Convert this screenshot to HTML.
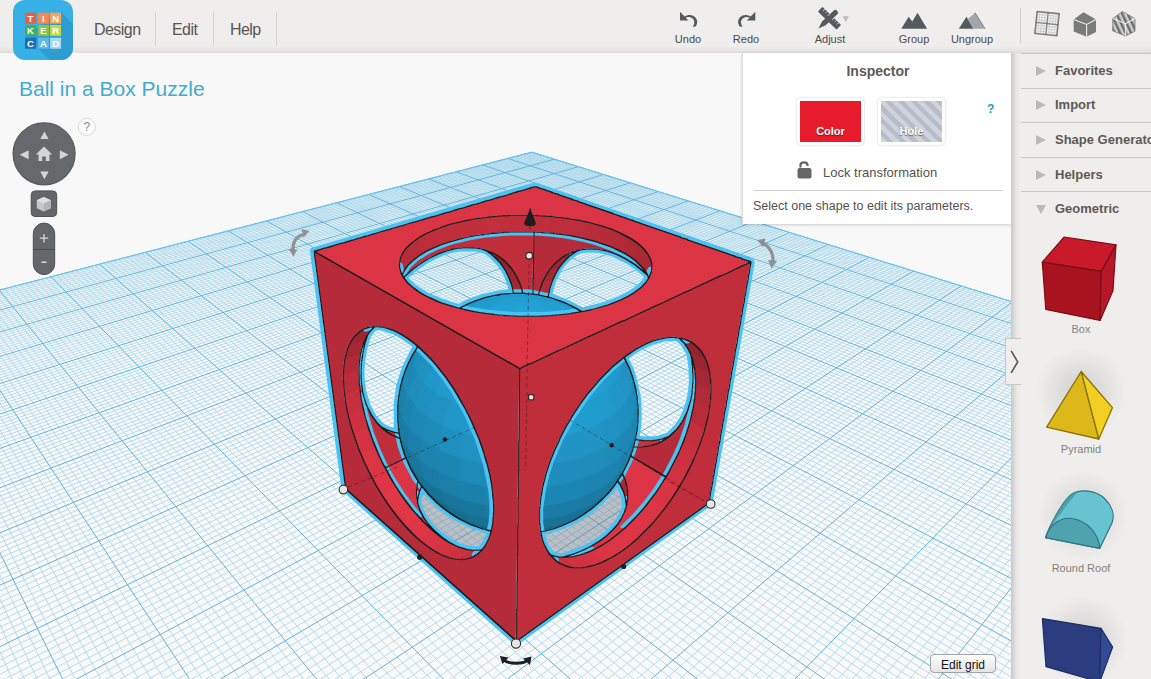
<!DOCTYPE html><html><head><meta charset="utf-8"><style>
*{margin:0;padding:0;box-sizing:border-box}
html,body{width:1151px;height:679px;overflow:hidden;background:#efeeec;font-family:"Liberation Sans",sans-serif;position:relative}
.abs{position:absolute}
#top{left:0;top:0;width:1151px;height:53px;background:linear-gradient(#efeeec 0,#efeeec 46px,#e2e1df 52px,#d9d8d6 53px)}
.nav{position:absolute;top:21px;font-size:16px;color:#595551;letter-spacing:-0.55px}
.sep{position:absolute;top:12px;width:1px;height:34px;background:#d6d4d1}
.tb{position:absolute;top:33px;font-size:11px;color:#4e4a47;text-align:center;width:60px;margin-left:-30px}
#view{left:0;top:53px;width:1011px;height:626px;background:#f8f8f8;overflow:hidden}
#side{left:1021px;top:53px;width:130px;height:626px;background:#efeeec}
#shadow{left:1011px;top:53px;width:10px;height:626px;background:linear-gradient(90deg,#c9c8c6,#e6e5e3 50%,#efeeec)}
.srow{position:absolute;left:0;width:130px;height:1px;background:#c9c6c2}
.stxt{position:absolute;left:34px;font-size:13px;font-weight:bold;color:#5d5955}
.tri{position:absolute;left:15px;width:0;height:0;border-top:5px solid transparent;border-bottom:5px solid transparent;border-left:10px solid #bdb9b5}
.lbl{position:absolute;font-size:11px;color:#85817d;text-align:center;width:100px;left:10px}
#insp{left:742px;top:53px;width:269px;height:171px;background:#fff;border-left:1px solid #dcdcdc;box-shadow:0 1px 3px rgba(0,0,0,.18)}
</style></head><body>
<div id="view" class="abs"><svg width="1011" height="626" viewBox="0 53 1011 626" style="position:absolute;left:0;top:0"><path d="M-202.8 6781.2 L1433.1 433 L531.9 152.2 L-323.9 373.9 Z" fill="#f9f9f9"/>
<path d="M-105.9 6405.5L-316.1 371.9M-210.7 6358.9L1423.9 430.2M-19.1 6068.7L-308.4 369.9M-217.8 5985.4L1414.8 427.3M59.1 5764.9L-300.8 367.9M-224.1 5652.6L1405.9 424.5M130.1 5489.5L-293.2 366M-229.7 5354.2L1397 421.8M194.7 5238.8L-285.7 364M-234.8 5085.1L1388.2 419M253.8 5009.5L-278.3 362.1M-239.4 4841.3L1379.5 416.3M308 4799.1L-270.9 360.2M-243.6 4619.3L1370.9 413.6M358 4605.2L-263.6 358.3M-247.5 4416.3L1362.4 411M404.1 4426L-256.3 356.4M-251 4230L1354 408.4M486.7 4105.6L-241.9 352.7M-257.2 3899.9L1337.3 403.2M523.8 3961.8L-234.8 350.8M-260 3753L1329.1 400.6M558.4 3827.4L-227.8 349M-262.6 3616.4L1321 398.1M590.8 3701.6L-220.8 347.2M-265 3489.1L1313 395.6M621.2 3583.6L-213.8 345.4M-267.2 3370.2L1305.1 393.1M649.8 3472.7L-207 343.6M-269.4 3258.9L1297.2 390.7M676.7 3368.2L-200.1 341.8M-271.3 3154.5L1289.4 388.2M702.1 3269.6L-193.3 340.1M-273.2 3056.4L1281.6 385.8M726.1 3176.4L-186.6 338.3M-274.9 2963.9L1274 383.4M770.4 3004.7L-173.3 334.9M-278.1 2794.3L1258.9 378.7M790.8 2925.4L-166.7 333.2M-279.6 2716.3L1251.5 376.4M810.3 2850L-160.2 331.5M-281 2642.4L1244.1 374.1M828.7 2778.2L-153.7 329.8M-282.3 2572.3L1236.8 371.8M846.4 2709.8L-147.3 328.2M-283.6 2505.6L1229.5 369.6M863.2 2644.6L-140.9 326.5M-284.8 2442.1L1222.4 367.4M879.2 2582.3L-134.6 324.9M-285.9 2381.7L1215.3 365.1M894.6 2522.8L-128.3 323.2M-287 2324L1208.2 362.9M909.2 2465.9L-122 321.6M-288.1 2268.9L1201.3 360.8M936.8 2359L-109.7 318.4M-290 2165.9L1187.5 356.5M949.7 2308.8L-103.6 316.8M-290.9 2117.7L1180.7 354.4M962.1 2260.6L-97.5 315.3M-291.8 2071.5L1174 352.3M974 2214.3L-91.5 313.7M-292.6 2027.1L1167.3 350.2M985.5 2169.8L-85.5 312.1M-293.4 1984.5L1160.7 348.1M996.6 2126.9L-79.6 310.6M-294.2 1943.6L1154.1 346.1M1007.2 2085.6L-73.7 309.1M-295 1904.2L1147.7 344.1M1017.5 2045.8L-67.8 307.6M-295.7 1866.3L1141.2 342.1M1027.4 2007.4L-62 306.1M-296.4 1829.8L1134.8 340.1M1046.1 1934.6L-50.5 303.1M-297.7 1760.6L1122.2 336.1M1055 1900L-44.8 301.6M-298.3 1727.9L1116 334.2M1063.7 1866.6L-39.2 300.1M-298.9 1696.3L1109.8 332.3M1072 1834.2L-33.6 298.7M-299.5 1665.7L1103.7 330.4M1080.1 1802.9L-28 297.2M-300 1636.1L1097.7 328.5M1087.9 1772.6L-22.5 295.8M-300.6 1607.5L1091.6 326.6M1095.4 1743.2L-17 294.4M-301.1 1579.9L1085.7 324.8M1102.8 1714.7L-11.5 293M-301.6 1553.1L1079.8 322.9M1109.9 1687.1L-6.1 291.6M-302.1 1527.1L1073.9 321.1M1123.5 1634.3L4.6 288.8M-303 1477.5L1062.3 317.5M1130 1609L9.9 287.4M-303.5 1453.8L1056.6 315.7M1136.3 1584.5L15.2 286M-303.9 1430.9L1050.9 313.9M1142.5 1560.6L20.4 284.7M-304.3 1408.5L1045.3 312.2M1148.5 1537.4L25.6 283.3M-304.7 1386.8L1039.7 310.4M1154.3 1514.9L30.8 282M-305.1 1365.7L1034.2 308.7M1159.9 1492.9L35.9 280.7M-305.5 1345.2L1028.7 307M1165.4 1471.5L41 279.4M-305.9 1325.3L1023.2 305.3M1170.8 1450.7L46.1 278M-306.3 1305.9L1017.8 303.6M1181.1 1410.7L56.1 275.4M-307 1268.6L1007.2 300.3M1186.1 1391.4L61.1 274.2M-307.3 1250.7L1001.9 298.6M1190.9 1372.6L66 272.9M-307.7 1233.2L996.6 297M1195.7 1354.3L70.9 271.6M-308 1216.2L991.5 295.4M1200.3 1336.4L75.8 270.3M-308.3 1199.6L986.3 293.8M1204.8 1319L80.6 269.1M-308.6 1183.4L981.2 292.2M1209.1 1301.9L85.5 267.8M-308.9 1167.6L976.1 290.6M1213.4 1285.3L90.2 266.6M-309.2 1152.2L971.1 289M1217.6 1269.1L95 265.4M-309.5 1137.1L966.1 287.5M1225.7 1237.7L104.4 262.9M-310 1108.1L956.2 284.4M1229.6 1222.5L109 261.7M-310.3 1094L951.3 282.9M1233.4 1207.7L113.7 260.5M-310.5 1080.3L946.5 281.4M1237.2 1193.1L118.3 259.3M-310.8 1066.9L941.7 279.9M1240.8 1178.9L122.8 258.2M-311 1053.8L936.9 278.4M1244.4 1165.1L127.4 257M-311.3 1041L932.1 276.9M1247.9 1151.5L131.9 255.8M-311.5 1028.4L927.4 275.4M1251.4 1138.1L136.4 254.6M-311.8 1016.2L922.8 274M1254.7 1125.1L140.8 253.5M-312 1004.1L918.1 272.5M1261.2 1099.8L149.7 251.2M-312.4 980.9L909 269.7M1264.4 1087.6L154 250.1M-312.6 969.6L904.4 268.3M1267.5 1075.6L158.4 248.9M-312.8 958.5L899.9 266.9M1270.5 1063.8L162.7 247.8M-313.1 947.7L895.5 265.5M1273.5 1052.2L167 246.7M-313.3 937.1L891 264.1M1276.4 1040.9L171.3 245.6M-313.4 926.7L886.6 262.7M1279.3 1029.8L175.5 244.5M-313.6 916.5L882.2 261.4M1282.1 1018.9L179.7 243.4M-313.8 906.5L877.9 260M1284.8 1008.2L183.9 242.3M-314 896.6L873.6 258.7M1290.2 987.4L192.2 240.2M-314.4 877.6L865.1 256M1292.8 977.3L196.3 239.1M-314.6 868.3L860.8 254.7M1295.4 967.4L200.4 238M-314.7 859.2L856.7 253.4M1297.9 957.6L204.5 237M-314.9 850.3L852.5 252.1M1300.3 948.1L208.6 235.9M-315.1 841.5L848.4 250.8M1302.8 938.7L212.6 234.9M-315.2 832.9L844.3 249.5M1305.1 929.4L216.6 233.9M-315.4 824.4L840.2 248.2M1307.5 920.3L220.5 232.8M-315.5 816.1L836.1 247M1309.8 911.4L224.5 231.8M-315.7 808L832.1 245.7M1314.3 894L232.3 229.8M-316 792L824.2 243.3M1316.4 885.5L236.2 228.8M-316.1 784.3L820.2 242M1318.6 877.2L240.1 227.8M-316.3 776.7L816.3 240.8M1320.7 869L243.9 226.8M-316.4 769.2L812.4 239.6M1322.8 860.9L247.7 225.8M-316.6 761.8L808.6 238.4M1324.8 853L251.5 224.8M-316.7 754.6L804.7 237.2M1326.8 845.2L255.3 223.8M-316.8 747.4L800.9 236M1328.8 837.5L259.1 222.9M-317 740.4L797.2 234.8M1330.8 829.9L262.8 221.9M-317.1 733.5L793.4 233.7M1334.6 815.2L270.2 220M-317.4 720.1L786 231.3M1336.4 808L273.8 219M-317.5 713.5L782.3 230.2M1338.3 800.8L277.5 218.1M-317.6 707L778.6 229.1M1340.1 793.9L281.1 217.1M-317.7 700.6L775 227.9M1341.8 787L284.7 216.2M-317.8 694.4L771.4 226.8M1343.6 780.2L288.3 215.3M-318 688.2L767.8 225.7M1345.3 773.5L291.9 214.3M-318.1 682.1L764.2 224.6M1347 766.9L295.4 213.4M-318.2 676.1L760.7 223.5M1348.7 760.4L299 212.5M-318.3 670.2L757.2 222.4M1352 747.7L305.9 210.7M-318.5 658.6L750.2 220.2M1353.6 741.5L309.4 209.8M-318.6 653L746.8 219.1M1355.1 735.4L312.9 208.9M-318.7 647.4L743.3 218.1M1356.7 729.3L316.3 208M-318.8 641.9L739.9 217M1358.2 723.4L319.7 207.1M-318.9 636.5L736.5 215.9M1359.7 717.5L323.1 206.3M-319 631.2L733.2 214.9M1361.2 711.7L326.5 205.4M-319.1 625.9L729.8 213.9M1362.7 706L329.8 204.5M-319.2 620.7L726.5 212.8M1364.2 700.4L333.2 203.6M-319.3 615.6L723.2 211.8M1367 689.3L339.8 201.9M-319.5 605.6L716.7 209.8M1368.4 683.9L343.1 201.1M-319.6 600.7L713.4 208.7M1369.8 678.6L346.4 200.2M-319.7 595.8L710.2 207.7M1371.1 673.3L349.6 199.4M-319.8 591.1L707 206.7M1372.5 668.1L352.9 198.5M-319.9 586.4L703.8 205.7M1373.8 663L356.1 197.7M-320 581.7L700.7 204.8M1375.1 658L359.3 196.9M-320.1 577.1L697.5 203.8M1376.4 653L362.5 196.1M-320.1 572.6L694.4 202.8M1377.6 648L365.6 195.2M-320.2 568.1L691.3 201.8M1380.1 638.4L371.9 193.6M-320.4 559.3L685.1 199.9M1381.4 633.6L375 192.8M-320.5 555L682.1 199M1382.6 628.9L378.1 192M-320.6 550.8L679.1 198M1383.8 624.3L381.2 191.2M-320.6 546.6L676 197.1M1384.9 619.7L384.3 190.4M-320.7 542.5L673 196.2M1386.1 615.2L387.3 189.6M-320.8 538.4L670.1 195.2M1387.3 610.7L390.4 188.8M-320.9 534.3L667.1 194.3M1388.4 606.3L393.4 188M-320.9 530.3L664.2 193.4M1389.5 602L396.4 187.3M-321 526.4L661.2 192.5M1391.7 593.4L402.4 185.7M-321.2 518.7L655.4 190.7M1392.8 589.2L405.3 184.9M-321.2 514.9L652.6 189.8M1393.9 585.1L408.3 184.2M-321.3 511.1L649.7 188.9M1394.9 581L411.2 183.4M-321.4 507.4L646.9 188M1396 576.9L414.1 182.7M-321.4 503.7L644 187.1M1397 572.9L417 181.9M-321.5 500.1L641.2 186.2M1398 568.9L419.9 181.2M-321.6 496.5L638.4 185.4M1399 565L422.8 180.4M-321.6 493L635.7 184.5M1400 561.1L425.7 179.7M-321.7 489.5L632.9 183.7M1402 553.5L431.4 178.2M-321.8 482.6L627.4 181.9M1403 549.8L434.2 177.5M-321.9 479.2L624.7 181.1M1403.9 546.1L437 176.7M-322 475.9L622 180.3M1404.9 542.4L439.8 176M-322 472.6L619.3 179.4M1405.8 538.8L442.5 175.3M-322.1 469.3L616.7 178.6M1406.7 535.2L445.3 174.6M-322.2 466L614 177.8M1407.6 531.7L448.1 173.9M-322.2 462.8L611.4 176.9M1408.5 528.2L450.8 173.2M-322.3 459.7L608.8 176.1M1409.4 524.7L453.5 172.5M-322.3 456.6L606.1 175.3M1411.2 517.9L458.9 171.1M-322.5 450.4L601 173.7M1412.1 514.5L461.6 170.4M-322.5 447.4L598.4 172.9M1412.9 511.2L464.3 169.7M-322.6 444.4L595.9 172.1M1413.8 507.9L466.9 169M-322.6 441.4L593.3 171.3M1414.6 504.6L469.6 168.3M-322.7 438.5L590.8 170.5M1415.4 501.4L472.2 167.6M-322.7 435.6L588.3 169.7M1416.2 498.2L474.8 166.9M-322.8 432.7L585.8 169M1417.1 495.1L477.4 166.3M-322.8 429.8L583.3 168.2M1417.9 492L480 165.6M-322.9 427L580.8 167.4M1419.5 485.8L485.2 164.3M-323 421.5L575.9 165.9M1420.2 482.8L487.8 163.6M-323.1 418.7L573.5 165.1M1421 479.8L490.3 162.9M-323.1 416L571.1 164.4M1421.8 476.8L492.8 162.3M-323.2 413.4L568.7 163.6M1422.5 473.9L495.4 161.6M-323.2 410.7L566.3 162.9M1423.3 471L497.9 161M-323.3 408.1L563.9 162.1M1424 468.1L500.4 160.3M-323.3 405.5L561.5 161.4M1424.8 465.2L502.9 159.7M-323.4 402.9L559.2 160.7M1425.5 462.4L505.3 159M-323.4 400.4L556.8 159.9M1426.9 456.8L510.3 157.8M-323.5 395.4L552.2 158.5M1427.6 454.1L512.7 157.1M-323.5 392.9L549.9 157.8M1428.3 451.3L515.1 156.5M-323.6 390.4L547.6 157.1M1429 448.7L517.6 155.9M-323.6 388L545.3 156.4M1429.7 446L520 155.2M-323.7 385.6L543 155.6M1430.4 443.3L522.4 154.6M-323.7 383.2L540.8 154.9M1431.1 440.7L524.8 154M-323.8 380.9L538.5 154.2M1431.7 438.1L527.1 153.4M-323.8 378.5L536.3 153.5M1432.4 435.6L529.5 152.8M-323.9 376.2L534.1 152.8" stroke="#a6d5ea" stroke-width="0.8" fill="none"/>
<path d="M-202.8 6781.2L-323.9 373.9M-202.8 6781.2L1433.1 433M446.9 4260L-249.1 354.5M-254.2 4058.5L1345.6 405.8M748.8 3088.3L-179.9 336.6M-276.6 2876.7L1266.4 381.1M923.3 2411.3L-115.8 320M-289.1 2216.3L1194.3 358.6M1036.9 1970.4L-56.3 304.6M-297 1794.6L1128.5 338.1M1116.8 1660.3L-0.7 290.2M-302.6 1501.9L1068.1 319.3M1176 1430.4L51.1 276.7M-306.6 1287L1012.5 301.9M1221.7 1253.2L99.7 264.2M-309.7 1122.4L961.1 285.9M1258 1112.3L145.3 252.3M-312.2 992.4L913.5 271.1M1287.5 997.7L188.1 241.2M-314.2 887L869.3 257.3M1312 902.6L228.4 230.8M-315.8 799.9L828.1 244.5M1332.7 822.5L266.5 220.9M-317.2 726.7L789.7 232.5M1350.3 754L302.5 211.6M-318.4 664.4L753.7 221.3M1365.6 694.8L336.5 202.8M-319.4 610.6L719.9 210.8M1378.9 643.2L368.8 194.4M-320.3 563.7L688.2 200.9M1390.6 597.7L399.4 186.5M-321.1 522.5L658.3 191.6M1401 557.3L428.5 178.9M-321.8 486L630.2 182.8M1410.3 521.3L456.2 171.8M-322.4 453.5L603.6 174.5M1418.7 488.9L482.6 164.9M-322.9 424.2L578.4 166.7M1426.2 459.6L507.8 158.4M-323.4 397.9L554.5 159.2M1433.1 433L531.9 152.2M-323.9 373.9L531.9 152.2" stroke="#4faadb" stroke-width="0.9" fill="none"/>
<path d="M-323.9 373.9L531.9 152.2L1433.1 433" stroke="#66c4ee" stroke-width="1" fill="none"/>
<path d="M421.5 485.8L419.2 491.8L417.8 497.5L417.8 504.5L419.8 510.2L423.8 517.8L427.8 523.5L432.8 529.2L437.5 533.5L444.8 539.2L450.5 542.8L457.5 546.2L463.2 548.2L471.5 549.8L478.5 549.8L481.8 549.2L485.2 544.8L488.2 538.8L490.5 530.8L482.8 528.8L470.8 524.5L459.2 518.8L452.5 514.8L443.2 508.2L436.8 502.8L428.2 494.2ZM617.5 480.8L608.5 492.5L600.2 501.2L591.2 508.8L582.2 515.2L574.8 519.5L561.2 525.8L550.2 529.5L540.5 531.5L542.2 538.8L544.2 544.5L546.8 549.8L549.8 554.2L554.8 555.8L561.8 556.8L576.8 552.2L584.8 548.8L596.5 542.5L606.2 535.5L612.8 529.2L617.5 523.5L621.2 517.8L623.5 513.2L625.8 506.5L625.5 500.8L624.2 494.8L621.5 487.8Z" fill="#6b7785" fill-opacity="0.45" fill-rule="evenodd"/>
<path d="M313.8 251.2L345.5 488.5L515.8 640.5L519.2 368.2ZM363.8 328.5L368.5 326.8L372.2 326.2L379.2 326.2L388.5 328.2L395.2 330.8L401.5 334.2L408.2 338.5L415.2 343.8L420.2 348.2L430.8 358.8L437.5 366.5L445.5 376.8L453.5 388.5L459.8 398.8L471.2 420.5L479.8 441.2L487.2 464.2L489.5 473.8L491.8 486.5L493.2 498.2L493.2 503.8L493.5 504.2L493.5 512.8L493.2 513.2L493.2 518.2L491.5 529.2L489.2 537.2L485.5 544.8L481.8 549.8L477.2 554.2L472.8 556.8L466.8 558.8L461.5 559.5L455.8 559.2L448.5 557.5L440.8 554.5L435.2 551.5L429.8 548.2L421.8 542.2L413.2 534.5L404.2 525.2L390.5 508.2L383.2 497.5L375.8 485.5L367.2 469.2L357.8 447.8L350.5 426.2L347.2 413.2L345.2 403.2L343.5 390.8L343.2 381.5L342.8 381.2L342.8 372.5L343.2 372.2L343.5 364.2L344.5 357.8L347.5 347.5L350.2 341.8L353.5 336.8L358.5 331.8Z" fill="#b62b39" fill-rule="evenodd"/>
<path d="M750.5 261.8L519.5 368.2L516.2 640.8L708.5 502.8ZM691.2 341.8L694.8 344.5L699.5 349.2L704.5 356.8L707.2 363.2L710.2 376.2L710.5 383.2L710.8 383.5L710.8 393.8L710.5 394.2L710.2 402.2L708.5 413.2L703.8 432.2L700.2 443.2L695.2 455.8L682.5 481.2L675.8 492.2L667.2 504.8L657.8 516.8L651.2 524.5L634.5 540.8L628.5 545.8L617.8 553.5L608.2 559.2L601.8 562.2L594.8 564.8L585.2 567.2L572.5 567.5L563.5 565.2L558.8 562.8L555.5 560.5L548.8 553.5L546.5 549.8L543.2 542.8L540.5 533.5L539.5 527.2L539.2 507.5L540.5 496.2L542.8 484.2L545.8 472.8L549.8 460.8L554.2 449.8L559.2 438.8L567.8 422.5L573.5 413.2L581.8 400.8L592.2 387.5L599.2 379.5L615.2 363.8L621.2 358.8L632.8 350.5L640.2 346.2L648.5 342.2L656.8 339.2L666.2 337.2L674.8 336.8L679.8 337.5L685.8 339.2Z" fill="#c02e3c" fill-rule="evenodd"/>
<path d="M750.2 261.8L748.5 260.8L741.8 258.8L535.8 186.5L532.2 187.2L524.2 189.8L518.5 191.2L504.8 195.5L499.2 196.8L491.2 199.5L485.5 200.8L477.5 203.5L471.8 204.8L463.8 207.5L458.2 208.8L450.2 211.5L444.5 212.8L442.2 213.8L314.2 251.2L518.8 367.8L520.2 367.8ZM398.8 264.2L399.5 259.2L402.2 252.8L405.8 247.8L410.5 243.2L415.2 239.5L424.5 233.8L431.5 230.5L440.8 226.8L460.5 221.2L482.5 217.2L498.2 215.5L508.5 215.2L508.8 214.8L536.2 214.8L536.5 215.2L546.8 215.5L562.8 217.2L583.8 220.8L601.5 225.5L619.2 232.2L626.5 235.8L633.2 239.8L638.2 243.5L644.2 249.2L648.2 254.5L650.2 258.5L651.5 262.8L651.8 267.5L651.2 271.8L648.5 278.2L644.8 283.2L640.5 287.5L634.5 292.2L628.5 295.8L619.8 300.2L612.5 303.2L592.8 309.2L578.5 312.2L567.8 313.8L555.8 315.2L540.8 315.8L540.5 316.2L515.8 316.2L515.5 315.8L504.2 315.5L490.8 314.2L467.2 310.2L451.5 306.2L440.5 302.5L433.2 299.5L425.5 295.8L419.2 292.2L411.8 286.8L407.2 282.5L403.2 277.5L400.5 272.5L399.5 269.5Z" fill="#db3444" fill-rule="evenodd"/>
<path d="M690.8 355.5L692.2 364.2L692.5 372.2L692.8 372.5L692.8 382.8L691.8 393.2L689.8 402.8L687.5 410.2L681.8 421.8L676.5 429.2L670.2 435.5L664.2 439.8L656.8 443.5L649.2 445.8L642.8 446.8L633.2 446.8L632.5 449.8L630.5 454.8L630.5 455.5L665.2 476.2L665.8 476.2L670.8 467.5L681.2 445.8L687.5 428.5L692.2 410.8L694.8 392.8L695.2 378.2L694.2 368.2L692.5 360.5ZM533.8 231.8L532.8 293.8L537.2 294.5L538.2 294.2L540.2 286.5L545.2 275.5L549.5 268.8L556.5 261.2L563.5 255.8L569.8 252.5L575.2 250.5L580.8 249.2L585.8 248.5L597.8 248.8L607.5 250.8L614.5 253.2L629.2 260.5L639.2 267.5L646.8 274.2L641.8 266.8L637.2 262.2L631.2 257.5L620.5 251.2L605.8 244.8L591.2 240.2L571.8 235.8L553.2 233.2Z" fill="#b62b39" fill-rule="evenodd"/>
<path d="M366.8 335.8L364.5 340.2L361.8 347.5L359.5 358.8L359.2 365.5L358.8 365.8L358.8 379.8L359.2 380.2L359.8 390.8L362.8 407.8L368.2 427.5L375.8 448.2L382.2 462.2L385.2 467.5L405.5 457.2L403.8 453.5L401.5 446.2L399.8 438.2L395.2 436.5L386.8 431.8L382.5 428.5L376.5 422.5L370.2 413.5L366.8 406.8L363.8 398.5L362.2 391.8L360.8 382.8L360.5 368.5L362.5 351.8L364.8 341.8ZM533.5 231.8L509.2 231.8L508.8 232.2L503.2 232.2L502.8 232.5L488.8 233.5L466.5 237.2L449.8 241.5L440.2 244.8L431.5 248.5L418.5 255.8L412.5 260.5L407.8 265.2L403.8 270.8L402.2 275.2L403.5 276.8L412.5 268.8L422.2 261.8L428.8 257.8L441.8 251.8L449.2 249.5L462.2 247.2L476.2 247.5L481.5 248.5L489.5 251.2L496.2 254.5L501.5 258.2L508.8 265.2L514.5 272.8L519.8 283.5L522.2 290.5L522.5 292.8L529.2 293.2L532.5 293.8Z" fill="#c02e3c" fill-rule="evenodd"/>
<path d="M385.2 467.8L387.2 471.8L396.8 488.2L404.8 499.8L413.2 510.5L421.5 519.8L430.5 528.5L438.2 534.8L445.5 539.8L437.5 533.8L429.2 525.5L423.5 517.8L419.5 510.2L416.8 501.8L415.8 493.8L416.2 486.8L417.5 480.2L415.5 477.5L410.2 468.2L405.8 458.2L405.2 457.8ZM665.5 476.5L634.8 458.2L630.2 455.8L627.8 462.2L622.2 472.8L624.8 479.2L627.2 487.8L627.5 490.2L627.2 502.2L625.8 507.8L623.8 513.2L621.5 517.8L617.8 523.5L613.2 529.2L606.2 535.8L600.5 540.2L593.2 544.8L584.8 549.2L576.8 552.5L569.2 555.2L562.2 556.8L567.2 556.8L576.2 555.5L588.5 551.5L600.5 545.5L609.8 539.5L615.2 535.5L626.2 526.2L636.5 515.8L643.8 507.5L655.8 491.8Z" fill="#db3444" fill-rule="evenodd"/>
<path d="M668.8 436.2L667.2 437.2L662.2 438.8L653.2 440.5L642.2 440.5L635.2 439.2L633.5 446.5L642.8 446.5L654.2 444.2L662.5 440.5ZM363.8 328.8L358.5 332.2L353.8 336.8L350.5 341.8L347.8 347.5L344.8 357.8L343.8 364.2L343.5 372.2L343.2 372.5L343.2 381.2L343.5 381.5L343.8 390.8L345.5 403.2L347.5 413.2L350.8 426.2L358.2 447.8L367.5 469.2L376.2 485.5L383.5 497.5L390.8 508.2L404.5 525.2L413.2 534.2L421.8 541.8L429.8 547.8L435.2 551.2L440.8 554.2L448.5 557.2L455.8 558.8L461.5 559.2L466.8 558.5L472.8 556.5L478.8 552.5L481.5 549.5L478.5 550.2L469.2 549.8L463.2 548.5L455.2 545.5L444.8 539.8L438.2 535.2L430.5 528.8L421.2 519.8L409.8 506.8L401.2 495.2L391.2 479.5L381.8 462.2L373.8 444.2L367.8 427.5L362.5 407.8L359.5 390.8L358.8 380.2L358.5 379.8L358.5 365.8L359.5 356.5L360.8 349.8L363.2 342.5L366.2 336.2L369.8 330.8L374.2 326.5L368.5 327.2ZM577.2 250.5L573.2 251.5L565.2 255.2L558.8 259.5L553.2 264.8L549.8 268.8L545.5 275.5L541.5 283.8L538.2 294.5L547.8 296.5L549.5 287.8L551.8 280.8L555.5 272.8L558.5 267.8L562.5 262.5L569.2 255.8Z" fill="#e03646" fill-rule="evenodd"/>
<path d="M366.8 327.8L365.2 328.5L366.8 328.2ZM575.5 250.8L572.8 251.8L575.5 251.2Z" fill="#89212b" fill-rule="evenodd"/>
<path d="M374.2 326.5L368.5 327.2L363.8 328.8L358.5 332.2L354.5 336.2L369.5 330.8ZM577.2 250.5L573.2 251.5L565.2 255.2L557.8 260.5L568.2 256.8L572.2 253.5Z" fill="#93232e" fill-rule="evenodd"/>
<path d="M370.8 329.8L369.8 329.8L355.5 335.2L351.5 340.2L348.2 346.8L363.8 341.2L367.2 334.5ZM568.8 256.2L567.8 256.2L558.8 259.5L553.2 264.8L548.5 270.8L549.5 270.8L552.2 269.5L559.2 267.2L562.5 262.5Z" fill="#9b2530" fill-rule="evenodd"/>
<path d="M364.2 340.5L348.5 346.2L346.2 352.5L344.5 360.5L359.8 354.8L361.5 347.5ZM559.5 266.5L549.2 270.2L545.5 275.5L541.5 283.8L542.5 283.8L552.5 279.8L555.5 272.8Z" fill="#a62834" fill-rule="evenodd"/>
<path d="M360.2 354.2L344.5 360.2L343.5 367.2L343.2 376.8L358.5 370.8L358.8 361.5ZM552.5 279.5L551.5 279.5L544.5 282.2L541.5 283.8L538.2 294.5L543.8 295.8L545.5 295.8L548.2 294.5L549.5 287.8Z" fill="#b02a37" fill-rule="evenodd"/>
<path d="M479.8 551.5L478.5 551.8L469.8 557.5L473.5 556.2ZM668.8 436.2L667.2 437.2L665.5 437.5L658.5 442.2L662.5 440.5Z" fill="#b82c39" fill-rule="evenodd"/>
<path d="M358.5 370.5L357.5 370.5L343.2 376.5L343.5 387.2L344.5 394.8L359.5 388.8L358.5 379.8ZM548.2 294.2L544.2 295.5L544.2 295.8L547.8 296.5Z" fill="#bb2d3a" fill-rule="evenodd"/>
<path d="M481.5 549.5L478.5 550.2L472.2 550.2L458.2 558.8L459.8 559.2L465.2 558.8L470.5 557.5L477.5 553.5ZM667.2 437.2L659.5 439.5L653.5 440.2L644.5 445.5L644.2 446.2L649.2 445.5L656.8 443.2L661.2 441.2Z" fill="#c32f3d" fill-rule="evenodd"/>
<path d="M359.5 388.2L344.5 394.5L345.5 403.2L347.8 414.2L349.5 413.8L362.5 408.2L362.5 406.5L360.2 395.5Z" fill="#c62f3e" fill-rule="evenodd"/>
<path d="M472.8 550.2L467.2 549.5L459.5 547.2L445.5 555.8L452.2 558.2L455.8 558.8L459.2 558.8L472.5 550.8ZM633.5 446.5L644.8 446.2L654.5 440.2L653.2 440.5L638.8 440.2L634.2 443.2Z" fill="#cb303f" fill-rule="evenodd"/>
<path d="M362.5 407.5L347.8 413.8L350.8 426.2L353.5 434.2L368.2 427.8L365.2 418.5Z" fill="#cd3140" fill-rule="evenodd"/>
<path d="M460.2 547.5L455.2 545.5L446.2 540.5L431.8 548.8L438.2 552.8L445.8 556.2ZM634.2 443.5L634.8 443.5L639.8 440.2L635.2 439.2Z" fill="#d33242" fill-rule="evenodd"/>
<path d="M367.8 427.5L366.2 427.8L353.5 433.8L356.2 442.5L361.2 454.5L375.5 447.5L372.2 439.8Z" fill="#d53343" fill-rule="evenodd"/>
<path d="M432.5 530.5L418.5 538.5L419.8 540.2L423.5 543.2L432.2 549.2L433.5 548.8L446.5 541.2L445.8 540.2L438.2 535.2Z" fill="#d83443" fill-rule="evenodd"/>
<path d="M375.2 447.2L360.8 453.8L364.5 462.8L370.2 474.2L384.5 467.2L378.8 455.8Z" fill="#db3444" fill-rule="evenodd"/>
<path d="M419.5 517.8L416.2 519.2L404.8 525.5L413.2 534.2L418.8 539.2L432.8 531.2ZM384.2 466.5L369.8 473.5L376.2 485.5L380.8 492.8L394.8 485.8L394.8 485.2L391.2 479.5Z" fill="#dd3545" fill-rule="evenodd"/>
<path d="M381.2 426.8L387.8 432.2L395.2 436.2L399.5 437.8L398.8 433.2L393.5 432.2L388.5 430.5ZM691.2 342.2L685.8 339.5L679.2 337.8L684.2 342.8L688.2 348.8L690.8 354.5L693.5 363.2L695.2 373.5L695.5 387.8L695.2 388.2L694.5 399.2L693.2 407.5L687.8 428.5L681.5 445.8L671.2 467.5L663.8 480.2L651.8 497.8L640.2 512.2L626.2 526.5L615.2 535.8L609.8 539.8L598.2 547.2L588.5 551.8L580.2 554.8L570.5 556.8L561.5 557.2L554.8 556.2L550.2 554.5L555.5 560.2L558.8 562.5L563.5 564.8L572.5 567.2L585.2 566.8L590.2 565.8L598.5 563.2L604.8 560.5L615.2 554.8L623.2 549.5L632.2 542.5L637.5 537.8L650.8 524.5L662.8 510.2L670.2 500.2L677.2 489.5L685.8 474.5L691.8 462.5L699.8 443.2L703.5 432.2L707.2 418.2L710.2 398.8L710.2 394.2L710.5 393.8L710.2 379.2L708.8 370.5L706.8 363.2L704.2 356.8L701.2 351.8L699.2 349.2L694.8 344.8ZM486.5 250.5L491.8 254.2L496.8 258.8L500.8 263.5L504.5 268.8L509.8 279.8L511.8 285.8L513.2 292.8L522.2 292.8L521.8 290.5L518.5 281.2L514.2 272.8L508.5 265.2L500.2 257.5L493.8 253.5Z" fill="#dd3545" fill-rule="evenodd"/>
<path d="M679.2 337.8L683.2 341.8L698.5 348.5L694.8 344.8L691.2 342.2L685.8 339.5ZM486.5 250.5L491.8 254.2L494.2 256.5L502.2 260.2L503.8 260.5L496.2 254.8L491.8 252.5Z" fill="#8b212b" fill-rule="evenodd"/>
<path d="M682.2 340.8L684.2 342.8L687.2 347.2L689.8 352.8L705.5 359.8L701.8 352.8L697.5 347.5ZM493.2 255.5L499.5 261.8L503.2 267.2L513.2 271.5L508.5 265.2L503.5 260.2L499.8 258.2Z" fill="#93232e" fill-rule="evenodd"/>
<path d="M689.8 352.2L692.8 360.5L694.2 367.2L709.5 374.2L707.2 364.2L705.2 359.2ZM502.8 266.5L505.8 271.2L509.8 280.2L519.8 284.8L518.5 281.2L512.8 270.8L505.2 267.2Z" fill="#9b2530" fill-rule="evenodd"/>
<path d="M694.2 366.5L695.2 373.5L695.5 383.8L710.5 390.8L710.5 383.5L710.2 383.2L709.8 376.2L709.2 373.5ZM509.8 279.8L511.8 285.8L513.2 292.8L522.2 292.8L521.8 290.5L519.8 284.5L513.5 281.2Z" fill="#a62834" fill-rule="evenodd"/>
<path d="M695.5 383.2L695.2 392.8L693.8 402.2L708.5 409.5L709.8 402.2L710.5 390.5Z" fill="#b02a37" fill-rule="evenodd"/>
<path d="M694.2 401.5L692.5 410.8L689.8 421.5L703.5 428.8L704.2 428.8L707.2 418.2L708.8 408.8Z" fill="#b82c39" fill-rule="evenodd"/>
<path d="M550.2 554.5L555.5 560.2L558.8 562.5L563.8 564.8L562.8 563.5L551.8 555.2ZM381.2 426.8L386.8 431.5L393.5 435.2L387.5 430.2ZM689.8 420.8L687.8 428.5L683.2 441.2L694.8 447.8L697.5 448.8L699.8 443.2L704.5 428.5Z" fill="#c32f3d" fill-rule="evenodd"/>
<path d="M550.5 554.8L550.8 555.5L563.5 564.8L570.5 566.8L576.8 567.2L576.5 566.5L563.8 557.2L558.2 556.8ZM683.5 440.8L674.5 461.2L686.5 468.2L688.5 468.8L691.8 462.5L697.8 448.5ZM384.8 428.8L385.2 429.5L391.8 434.5L399.5 437.8L398.8 433.2L393.5 432.2Z" fill="#cb303f" fill-rule="evenodd"/>
<path d="M563.2 557.2L563.5 557.8L576.2 567.2L585.2 566.8L590.2 565.8L591.5 565.2L577.8 555.2L570.5 556.8ZM674.5 460.5L671.2 467.5L663.8 480.2L677.5 488.5L682.2 481.2L688.8 468.5Z" fill="#d03241" fill-rule="evenodd"/>
<path d="M577.5 555.5L577.8 556.2L590.5 565.5L595.8 564.2L606.5 559.5L593.2 549.8L585.2 553.2Z" fill="#d53343" fill-rule="evenodd"/>
<path d="M663.8 479.8L651.5 498.5L665.2 506.8L670.2 500.2L677.2 489.5L677.8 487.8L664.5 479.8Z" fill="#d83443" fill-rule="evenodd"/>
<path d="M608.5 540.8L598.2 547.2L592.5 549.8L593.2 550.8L605.8 559.8L615.2 554.8L621.8 550.2ZM651.8 497.8L644.2 507.5L637.5 514.8L650.8 523.5L651.5 523.5L653.5 521.5L665.5 506.5Z" fill="#db3444" fill-rule="evenodd"/>
<path d="M417.8 480.8L416.8 484.8L416.2 490.8L416.5 497.8L417.2 501.8L417.2 499.5L418.2 494.2L421.2 486.2L421.2 485.5ZM621.8 473.5L617.5 480.5L620.2 484.5L623.5 491.8L625.2 497.5L626.2 505.2L627.2 499.5L627.2 490.2L625.5 482.2ZM399.2 264.2L399.8 269.5L401.8 274.5L404.5 269.2L407.5 265.2L412.5 260.2L420.5 254.2L431.5 248.2L440.2 244.5L449.8 241.2L463.5 237.5L483.5 233.8L498.8 232.2L508.8 231.8L509.2 231.5L535.5 231.5L535.8 231.8L541.5 231.8L558.8 233.5L580.2 237.2L595.8 241.2L611.8 246.8L626.5 254.2L637.2 261.8L642.2 266.8L646.8 273.5L648.5 277.5L650.8 271.8L651.5 267.5L651.2 262.8L649.8 258.5L647.8 254.5L643.8 249.2L638.2 243.8L633.2 240.2L626.5 236.2L619.2 232.5L601.5 225.8L583.8 221.2L562.8 217.5L546.8 215.8L536.5 215.5L536.2 215.2L508.8 215.2L508.5 215.5L498.2 215.8L482.5 217.5L460.5 221.5L440.8 227.2L433.8 229.8L424.5 234.2L418.2 237.8L410.5 243.5L406.2 247.8L402.5 252.8L399.8 259.2Z" fill="#c02e3c" fill-rule="evenodd"/>
<path d="M627.2 490.2L626.8 490.2L626.5 496.5L625.8 499.8L626.2 505.2L627.2 499.5ZM650.8 262.5L649.5 275.2L650.8 271.8L651.5 267.5Z" fill="#a12632" fill-rule="evenodd"/>
<path d="M623.5 477.2L622.5 489.8L624.5 494.8L626.2 503.5L627.2 490.2L626.2 484.5ZM646.2 252.2L644.5 270.2L646.8 273.5L648.5 277.5L649.8 274.8L651.2 262.8L649.8 258.5Z" fill="#a62834" fill-rule="evenodd"/>
<path d="M621.8 473.5L617.5 480.5L620.2 484.5L622.8 490.2L623.8 477.5ZM637.2 243.2L635.5 260.5L642.2 266.8L644.8 270.5L646.5 252.5L643.8 249.2Z" fill="#a82834" fill-rule="evenodd"/>
<path d="M624.8 235.5L623.2 252.5L629.2 255.8L636.2 260.8L637.5 243.5L633.2 240.2Z" fill="#ae2936" fill-rule="evenodd"/>
<path d="M417.5 482.8L416.8 484.8L416.2 490.8L416.5 497.8L417.2 501.8L417.2 499.5L418.5 493.8ZM401.2 255.8L399.8 259.2L399.2 264.5L399.8 269.5L401.8 274.5L402.5 273.2L402.5 271.8L402.2 271.5Z" fill="#b02a37" fill-rule="evenodd"/>
<path d="M609.2 228.5L607.8 245.5L614.2 247.8L623.8 252.5L625.2 235.5L616.2 231.2Z" fill="#b32b38" fill-rule="evenodd"/>
<path d="M417.8 480.8L417.2 484.2L418.2 494.2L421.2 485.5ZM407.5 246.5L403.8 250.8L400.8 256.2L402.2 273.5L405.2 268.2L408.5 264.2ZM591.2 223.2L590.2 239.8L595.8 241.2L608.2 245.5L608.5 245.2L609.5 228.8L601.5 225.8Z" fill="#b62b39" fill-rule="evenodd"/>
<path d="M417.8 238.2L412.5 241.8L407.2 246.8L408.2 264.5L412.5 260.2L418.8 255.5Z" fill="#b82c39" fill-rule="evenodd"/>
<path d="M431.5 230.8L424.5 234.2L417.5 238.5L418.5 255.5L426.2 250.8L432.2 248.2ZM571.5 218.8L570.8 235.5L580.2 237.2L590.5 239.8L591.5 223.2L583.8 221.2Z" fill="#bb2d3a" fill-rule="evenodd"/>
<path d="M447.8 225.2L440.8 227.2L431.2 231.2L431.8 248.2L440.2 244.5L448.5 241.8ZM550.5 216.2L550.2 232.8L558.8 233.5L571.2 235.5L571.5 224.2L571.8 223.8L571.8 219.2L571.5 218.8Z" fill="#be2d3b" fill-rule="evenodd"/>
<path d="M507.8 215.5L498.2 215.8L486.2 217.2L486.5 233.5L498.8 232.2L507.8 231.8Z" fill="#c32f3d" fill-rule="evenodd"/>
<path d="M623.8 357.2L612.2 366.8L599.5 379.5L587.2 394.2L580.5 403.2L572.2 415.8L565.2 427.8L559.5 438.8L554.5 449.8L550.2 460.8L546.2 472.8L542.5 487.2L540.8 496.2L539.5 507.5L539.5 523.8L540.5 531.2L543.5 530.8L553.5 528.2L568.2 522.5L579.5 516.5L591.2 508.5L600.2 500.8L611.5 488.5L619.5 477.2L627.5 462.2L632.2 449.8L635.2 438.5L637.2 425.8L637.8 412.5L637.5 412.2L637.5 404.5L636.5 395.5L633.2 380.2L629.2 368.5ZM417.5 346.5L412.2 355.2L407.8 363.8L404.8 371.2L400.2 386.8L397.8 401.2L397.5 421.2L397.8 421.5L398.2 428.2L400.2 439.5L401.8 446.2L405.2 456.2L410.5 468.2L419.2 482.5L428.5 494.2L439.5 504.8L448.5 511.8L459.2 518.5L468.5 523.2L475.8 526.2L490.8 530.5L492.2 523.8L492.8 518.2L492.8 513.2L493.2 512.8L493.2 504.2L492.8 503.8L492.8 498.2L491.8 488.8L489.2 473.8L486.8 464.2L483.8 453.8L478.5 438.5L470.8 420.5L464.5 407.8L453.2 388.5L445.2 376.8L435.5 364.5L430.5 358.8L420.2 348.5ZM459.5 307.8L467.2 309.8L485.8 313.2L504.2 315.2L515.5 315.5L515.8 315.8L540.5 315.8L540.8 315.5L551.8 315.2L567.8 313.5L580.8 311.2L574.8 307.5L567.5 303.8L552.5 298.2L538.8 294.8L525.2 293.2L509.8 293.2L500.2 294.2L491.2 295.8L475.5 300.5L468.2 303.5Z" fill="#1e8dbb" fill-rule="evenodd"/>
<path d="M445.5 509.5L452.5 514.5L459.5 518.5L455.5 515.2L453.2 514.2L447.2 510.2L446.5 510.2L446.2 509.5Z" fill="#156181" fill-rule="evenodd"/>
<path d="M455.5 515.5L455.8 516.5L459.2 518.5L468.5 523.2L478.2 526.8L474.5 524.5L472.5 522.5L464.8 519.8ZM420.2 483.5L421.2 485.2L421.2 484.5Z" fill="#156484" fill-rule="evenodd"/>
<path d="M472.5 522.8L472.5 523.5L475.8 526.2L490.8 530.5L491.5 527.5L486.2 526.5ZM588.8 510.2L588.2 510.2L587.8 510.8L587.2 510.8L584.8 512.8ZM420.8 484.8L428.5 494.2L436.8 502.5L439.8 504.8L435.5 500.2L431.8 494.8L428.5 492.2L421.5 484.8Z" fill="#166688" fill-rule="evenodd"/>
<path d="M584.8 512.8L584.2 512.8L581.2 514.8L572.5 519.2L566.8 521.5L554.2 525.5L540.2 528.2L540.5 531.2L550.2 529.2L562.8 524.8L574.8 519.2ZM431.5 495.2L431.5 495.8L435.2 500.8L439.5 504.8L448.5 511.8L452.5 514.5L455.2 515.5L455.2 514.8L451.5 511.2L446.8 504.5L439.5 500.5L432.8 495.5Z" fill="#16698b" fill-rule="evenodd"/>
<path d="M404.8 454.8L410.5 468.2L415.8 477.5L419.8 483.2L419.8 482.5L419.2 482.2L419.2 481.5L417.5 479.2L414.8 473.8L412.5 467.2L409.2 462.8Z" fill="#176b8e" fill-rule="evenodd"/>
<path d="M446.8 504.8L446.8 505.5L449.8 510.2L455.2 515.8L464.2 520.2L470.2 522.5L472.2 522.8L472.2 522.2L467.8 516.2L466.5 512.8L456.8 509.5ZM604.8 495.8L603.8 496.5L603.8 497.2ZM612.5 486.8L608.2 491.2L606.2 493.8L606.2 494.5ZM613.8 485.2L613.2 485.5L613.2 486.2Z" fill="#176e91" fill-rule="evenodd"/>
<path d="M466.2 513.2L467.5 516.8L472.2 523.2L485.5 526.8L490.5 527.8L491.5 527.5L492.5 519.2L478.2 516.5L467.5 513.2ZM608.5 491.5L607.8 491.5L602.5 496.2L595.2 501.2L590.2 507.8L586.5 511.2L586.5 511.8L594.5 505.8L600.2 500.8L608.2 492.5ZM412.2 467.5L412.2 468.5L414.5 474.5L419.2 482.5L423.2 487.8L430.2 494.5L431.5 494.8L431.5 494.2L427.5 487.2L424.8 479.5L420.8 476.2L414.8 470.2L412.8 467.5ZM398.2 427.2L400.2 439.5L401.8 446.2L404.2 452.8L401.8 444.2L400.8 435.2L399.2 430.8L398.5 427.2Z" fill="#187095" fill-rule="evenodd"/>
<path d="M595.2 501.5L594.5 501.5L590.5 504.2L581.2 508.8L565.8 514.5L554.2 517.5L539.5 519.8L539.5 523.8L540.2 528.5L543.8 528.2L554.8 525.8L567.5 521.8L573.2 519.5L580.5 515.8L588.5 510.5L595.2 502.5ZM424.5 479.5L424.5 480.5L427.2 487.8L431.2 495.2L438.8 500.8L443.8 503.8L447.2 505.2L444.2 498.5L441.8 490.5L440.8 489.5L432.8 485.2L425.2 479.5ZM400.5 435.8L401.5 444.8L404.2 453.5L406.8 460.2L411.2 466.8L412.2 467.2L409.5 456.5L408.5 447.8L403.8 441.5L401.2 435.8Z" fill="#187298" fill-rule="evenodd"/>
<path d="M441.2 490.2L443.8 499.2L447.2 505.5L456.2 509.8L461.2 511.8L466.2 513.2L463.2 503.5L462.2 498.5L455.8 496.5ZM629.2 457.8L626.2 463.2L624.5 467.8L627.5 462.2ZM398.5 398.2L397.8 401.2L397.5 408.5L397.8 408.5L397.8 405.5L398.5 402.5Z" fill="#19759b" fill-rule="evenodd"/>
<path d="M461.8 498.8L464.2 508.8L466.2 513.5L477.5 516.8L488.2 518.8L486.2 508.8L485.8 504.5L477.2 502.8L466.8 500.2L464.5 499.2ZM626.8 462.8L626.2 462.8L622.5 468.5L616.5 474.8L614.8 479.8L611.8 485.8L608.8 490.2L608.8 490.8L609.5 490.8L611.5 488.5L619.5 477.2L622.5 472.2ZM408.2 448.5L409.2 457.2L411.8 467.5L414.5 470.8L420.2 476.5L424.2 479.8L424.8 479.8L422.5 470.5L421.5 460.5L416.8 456.8L408.8 448.5ZM397.8 402.2L397.5 405.2L397.8 425.2L398.8 431.5L400.2 435.5L400.8 435.5L400.5 434.5L400.5 421.8L401.5 414.5L399.2 407.8L398.5 402.2Z" fill="#19779e" fill-rule="evenodd"/>
<path d="M485.5 504.5L485.8 509.5L487.5 518.5L488.8 519.2L492.5 519.5L493.2 512.8L493.2 505.5ZM616.8 475.2L616.2 475.2L611.2 479.8L602.8 485.8L587.8 493.8L583.2 495.5L581.5 501.5L577.8 509.5L577.8 510.5L579.5 510.2L586.2 507.2L593.5 503.2L599.2 499.5L607.5 492.8L609.2 491.2L612.2 486.5L615.2 480.5ZM636.5 430.2L636.2 430.2L636.2 431.5Z" fill="#1a7aa2" fill-rule="evenodd"/>
<path d="M583.5 495.8L581.5 496.2L573.8 499.2L561.8 502.5L552.2 504.5L539.8 506.2L539.5 507.5L539.5 520.2L543.8 519.8L557.8 517.2L566.5 514.8L577.8 510.8L580.8 504.8ZM421.2 460.8L421.8 469.2L424.2 479.5L432.2 485.5L440.8 490.5L441.5 490.5L439.5 479.8L438.8 471.2L430.5 466.8L422.5 461.2ZM636.2 431.5L635.8 431.5L634.2 437.2L630.8 443.5L630.8 445.8L629.5 453.2L626.8 462.2L627.5 462.2L632.2 449.8L635.2 438.5ZM400.8 415.2L400.2 421.2L400.2 435.2L403.5 442.2L407.2 447.5L408.5 448.2L408.2 439.8L408.5 439.5L408.5 433.5L409.2 426.8L404.2 420.2L401.8 415.2ZM405.2 371.2L404.8 371.2L402.2 379.2L400.2 386.8L398.5 395.8L398.2 400.5L398.8 400.5L398.8 398.8L400.5 391.8L403.8 382.5L403.8 377.8Z" fill="#1a7ca5" fill-rule="evenodd"/>
<path d="M438.5 471.5L439.2 480.5L441.2 490.5L455.2 496.8L460.8 498.8L462.2 498.8L460.8 489.8L460.2 479.8L452.8 477.5L443.2 473.5L439.5 471.5Z" fill="#1b7fa8" fill-rule="evenodd"/>
<path d="M459.8 479.8L460.5 490.5L461.8 499.2L476.5 503.2L485.8 504.8L485.2 498.8L485.2 493.8L484.8 493.5L484.8 485.8L472.8 483.5ZM631.2 443.8L630.5 443.8L626.5 449.8L620.5 456.2L619.5 464.8L616.8 474.8L617.5 474.8L621.2 471.2L627.2 462.8L629.8 453.8L631.2 446.5ZM408.8 427.2L408.2 432.8L408.2 438.8L407.8 439.2L408.2 448.8L416.2 457.2L420.2 460.5L421.5 460.8L421.2 448.2L422.2 439.2L417.2 435.2L409.5 427.2ZM636.8 400.5L636.8 405.8L636.2 408.5L636.2 412.2L636.8 416.5L636.5 428.8L636.8 428.8L637.5 414.5L637.8 414.2L637.5 404.5ZM403.8 382.2L403.2 382.2L400.8 388.8L398.2 400.2L398.5 406.8L400.8 414.8L401.5 414.8L403.5 404.2L406.8 394.5L406.8 392.8L404.8 387.8ZM417.8 346.5L415.5 349.5L412.2 355.2L407.8 363.8L406.2 368.2L411.5 358.2L415.5 352.5Z" fill="#1b81ab" fill-rule="evenodd"/>
<path d="M484.5 485.8L484.5 494.2L484.8 494.5L484.8 499.5L485.5 504.8L493.2 505.8L492.8 498.2L491.5 486.8ZM620.8 456.5L620.2 456.5L612.2 463.2L604.5 468.2L596.5 472.5L585.8 476.8L585.2 485.5L583.2 495.8L584.5 495.8L588.5 494.2L603.5 486.2L611.8 480.2L617.2 475.2L619.8 465.5ZM421.8 439.2L420.8 447.5L421.2 461.2L429.8 467.2L437.8 471.5L438.8 471.5L438.8 455.5L439.5 449.5L430.2 444.5L422.5 439.2ZM406.5 393.5L404.5 398.8L402.5 406.2L401.2 412.8L401.2 415.5L403.8 420.8L406.5 424.8L408.5 427.2L409.5 427.2L409.5 425.2L411.2 416.8L414.5 406.2L414.5 404.8L409.2 397.8L407.2 393.5Z" fill="#1c84ae" fill-rule="evenodd"/>
<path d="M586.2 477.2L585.2 477.2L572.8 481.5L563.8 483.8L549.8 486.5L542.5 487.2L540.2 500.8L539.8 506.5L548.8 505.5L562.5 502.8L574.5 499.5L583.5 496.2L585.5 486.2ZM439.2 449.5L438.5 454.8L438.5 471.8L452.2 477.8L460.2 480.2L460.2 466.5L460.5 466.2L460.8 457.5L452.2 454.8L443.8 451.5L440.2 449.5ZM636.5 410.2L635.8 410.2L633.8 416.8L630.8 422.2L631.2 429.8L631.5 430.2L631.2 443.2L631.8 443.2L635.2 436.2L636.5 431.2L637.2 425.8L637.2 415.8ZM630.5 372.8L631.5 377.8L634.2 385.2L634.8 388.8L635.2 388.8L633.2 380.2ZM415.2 352.5L414.5 352.5L409.8 359.8L404.8 371.2L403.8 374.5L403.5 381.8L404.2 381.8L405.2 378.8L409.5 370.2L414.2 362.8L414.2 357.5Z" fill="#1c86b2" fill-rule="evenodd"/>
<path d="M631.2 422.5L630.5 422.5L629.5 424.5L626.2 428.8L620.5 434.5L620.8 442.8L621.2 443.2L621.2 450.8L620.5 456.5L621.2 456.5L626.8 450.5L631.5 443.8L631.8 429.5L631.5 429.2ZM414.2 405.2L410.8 416.2L408.8 427.5L416.5 435.5L421.5 439.5L422.2 439.5L423.5 429.5L426.8 415.8L421.2 411.5L414.8 405.2ZM414.2 362.5L413.5 362.5L409.2 369.5L403.5 381.5L404.2 387.2L406.5 393.5L407.2 393.5L409.8 386.5L413.8 378.5L417.2 373.2L417.2 372.2L414.8 366.5Z" fill="#1d88b5" fill-rule="evenodd"/>
<path d="M460.5 457.8L460.2 465.5L459.8 465.8L459.8 480.2L460.2 480.5L475.2 484.5L491.5 487.2L489.2 473.8L486.5 463.5L473.8 461.2L462.2 457.8ZM620.8 434.8L620.2 434.8L612.5 441.2L605.2 445.8L605.8 451.5L605.5 467.8L606.8 467.5L612.8 463.5L619.8 457.8L621.2 456.2L621.5 442.5L621.2 442.2ZM426.5 415.8L423.2 428.8L421.8 436.8L421.8 439.5L429.5 444.8L439.5 449.8L440.5 440.5L443.5 425.2L435.8 421.5L427.2 415.8ZM631.5 377.5L631.8 384.2L630.8 389.5L633.8 398.2L635.8 407.5L635.8 409.5L636.5 409.5L637.2 406.5L637.2 400.8L636.5 395.5L633.5 381.5L632.2 377.5ZM417.8 346.5L416.2 348.5L415.2 351.8L415.8 351.8L418.8 348.2L418.8 347.5Z" fill="#1d8bb8" fill-rule="evenodd"/>
<path d="M443.2 425.5L442.5 427.2L440.2 439.8L439.2 449.8L451.5 455.2L459.5 457.8L460.8 457.8L461.5 448.8L463.8 432.8L451.8 428.8L444.5 425.5ZM626.2 400.8L625.2 401.2L621.8 405.8L615.8 411.8L615.8 413.2L618.5 422.5L620.5 434.8L621.2 434.8L626.5 429.5L631.2 422.8L629.5 412.5ZM423.8 382.8L418.2 394.2L414.2 405.5L420.5 411.8L425.2 415.5L426.8 416.2L429.8 406.5L435.2 393.8L435.5 391.8L429.8 387.8L424.5 382.8ZM422.5 350.8L418.5 355.5L413.8 362.2L414.5 367.2L416.5 372.5L417.8 372.2L422.5 364.8L428.5 357.5L428.5 356.8Z" fill="#1e90bf" fill-rule="evenodd"/>
<path d="M463.5 432.8L461.2 448.2L460.5 458.2L473.2 461.5L485.2 463.5L485.2 460.2L485.5 459.8L485.2 458.2L477.5 436.2L466.2 433.5L464.8 432.8ZM616.2 412.2L615.2 412.2L609.5 416.8L601.2 421.8L604.5 438.2L605.2 446.2L605.8 446.2L613.2 441.5L620.8 435.2L618.8 421.8ZM435.2 392.2L429.5 405.8L426.5 416.2L435.2 421.8L442.5 425.5L443.5 425.5L446.5 413.5L450.8 400.2L441.2 395.5L436.2 392.2ZM621.8 358.8L621.8 364.5L620.8 369.2L623.8 373.8L628.5 383.2L630.5 388.5L631.5 388.8L632.2 384.8L631.8 376.8L627.2 366.5L622.8 359.2ZM428.2 356.5L422.2 364.2L416.8 372.2L416.8 373.2L418.2 375.8L423.5 382.8L424.5 382.8L429.8 373.5L435.5 365.5L435.5 364.5ZM571.8 306.2L576.2 309.2L580.8 311.2ZM526.8 293.5L526.8 293.8L529.5 293.8ZM508.5 293.5L500.2 294.2L485.8 297.2L475.5 300.5L468.2 303.5L463.8 305.8L472.5 302.8L480.2 301.5L484.5 299.2L493.2 296.2L500.8 294.5L508.5 293.8ZM521.5 293.2L521.5 293.5L525.5 293.5L525.2 293.2ZM509.5 293.5L513.5 293.5L513.5 293.2L509.8 293.2Z" fill="#1f92c2" fill-rule="evenodd"/>
<path d="M485.2 459.2L484.8 459.5L484.8 463.5L486.5 463.8ZM601.8 422.2L600.5 422.2L592.2 426.5L581.2 430.8L568.8 434.5L560.8 436.2L554.5 449.8L549.2 464.2L563.8 461.8L577.8 458.2L592.5 452.8L605.5 446.2L605.2 439.8ZM620.8 368.8L619.8 372.2L616.2 378.5L616.2 379.8L621.5 390.2L625.5 400.8L626.2 400.8L627.8 398.5L630.2 393.5L631.2 390.2L631.2 388.2L624.2 373.2L621.5 368.8ZM577.2 309.2L577.2 309.8L579.5 311.5L580.8 311.2ZM479.5 301.2L474.5 301.8L467.5 303.8L459.8 307.8L462.8 308.5L468.2 306.5L474.8 305.2L479.2 302.2ZM529.8 293.8L529.8 294.2L532.2 294.2L540.8 295.8L545.8 297.5L548.5 297.5L551.5 298.2L542.2 295.5L532.2 293.8Z" fill="#2095c5" fill-rule="evenodd"/>
<path d="M450.5 400.2L446.2 412.8L443.5 422.8L443.2 425.8L453.8 430.2L463.8 433.2L467.5 413.8L462.5 404.5ZM615.8 378.8L613.2 382.5L606.8 388.5L606.8 389.5L612.5 402.2L615.5 411.8L616.5 412.2L623.8 404.5L626.2 401.2L626.2 400.5L619.8 385.2L616.5 378.8ZM435.2 364.5L427.8 375.5L424.2 381.8L423.8 383.2L429.2 388.2L434.2 391.8L435.8 392.2L444.2 375.5ZM622.2 358.5L616.8 362.8L620.8 368.8L621.5 368.8L622.2 365.2ZM474.5 304.8L472.8 304.8L467.5 306.2L461.5 308.2L461.5 308.5L470.5 310.5L472.2 307.8L474.5 305.5ZM546.8 297.2L546.8 297.8L552.8 300.2L557.8 300.8L565.5 303.2L561.2 301.2L548.8 297.2Z" fill="#2097c8" fill-rule="evenodd"/>
<path d="M467.2 413.5L464.8 424.2L463.5 433.2L477.5 436.5L472.5 424.2ZM607.2 388.8L605.8 389.2L601.2 392.8L593.5 397.2L597.8 409.5L601.2 422.2L602.2 422.2L606.2 419.8L616.2 412.5L612.8 401.5ZM443.8 375.2L439.8 382.2L435.2 392.5L440.5 395.8L449.2 400.2L450.8 400.5L454.5 390.8ZM617.2 362.5L609.8 369.2L615.8 379.2L616.8 378.8L618.5 376.2L621.2 369.8L621.2 368.2ZM553.5 299.8L553.5 300.5L559.5 303.8L563.5 307.5L566.8 308.2L573.8 310.5L576.5 311.8L580.2 311.5L579.5 310.5L577.2 308.8L567.5 303.8L561.2 301.2ZM537.8 294.8L525.2 293.2L509.8 293.2L500.2 294.2L492.5 295.8L483.8 298.8L479.2 301.2L474.8 304.2L474.8 304.8L487.2 303.2L496.2 303.2L498.2 301.5L502.2 299.5L506.5 298.2L512.2 297.2L518.5 296.8L529.2 298.2L533.2 296.2L537.8 295.5Z" fill="#219acc" fill-rule="evenodd"/>
<path d="M594.2 397.5L592.8 397.5L588.5 399.8L580.5 403.2L568.2 422.5L560.8 436.5L569.5 434.8L581.8 431.2L592.8 426.8L601.5 422.5L601.5 420.8L599.2 412.2ZM454.2 390.5L450.8 398.5L450.5 400.5L456.5 403.2L462.8 405.2L459.5 398.8ZM610.2 368.8L601.2 377.8L606.5 388.8L607.5 388.8L609.2 387.5L616.2 379.8L616.2 378.5ZM563.8 307.2L564.2 308.5L566.5 311.8L569.5 312.8L572.2 312.8L577.8 311.8L574.5 310.2L567.5 307.8ZM495.8 302.8L486.5 302.8L474.5 304.5L471.8 307.2L470.2 310.2L473.8 311.2L476.5 311.2L486.2 308.5L493.2 307.5L493.8 305.8L495.8 303.5ZM528.8 297.5L528.8 298.2L535.5 300.2L539.5 302.5L547.8 302.2L559.2 303.5L559.2 302.8L550.8 298.5L545.2 296.5L538.5 294.8L532.5 295.8Z" fill="#219ccf" fill-rule="evenodd"/>
<path d="M601.5 377.5L590.5 390.2L593.5 397.5L594.5 397.5L599.2 394.8L607.2 389.2L606.2 386.2ZM494.5 311.8L494.5 310.8L493.5 309.2L493.5 306.8L485.5 308.2L474.8 310.8L475.5 311.5L488.5 313.5L490.2 313.5ZM539.8 302.8L542.5 305.5L542.8 306.5L550.5 307.5L563.2 310.5L566.2 311.5L566.8 313.5L570.8 312.8L570.8 312.5L566.8 311.5L564.5 307.5L559.5 303.2L548.5 301.8L540.2 301.8ZM532.5 298.5L526.8 297.2L519.5 296.8L519.2 296.5L509.2 297.2L501.5 299.2L497.5 301.2L494.2 304.2L494.2 305.2L508.5 304.8L518.8 305.8L525.8 301.8L532.5 299.5Z" fill="#229ed2" fill-rule="evenodd"/>
<path d="M590.8 389.8L587.2 394.2L580.5 403.5L586.2 401.5L593.8 397.8L593.5 395.8ZM566.8 311.2L561.5 309.5L551.2 307.2L543.5 306.2L542.8 304.8L539.8 301.8L534.5 299.2L532.2 298.8L525.2 301.5L518.2 305.5L509.2 304.5L493.8 304.8L493.2 306.2L493.2 309.8L493.8 311.2L493.2 311.8L488.8 313.2L488.8 313.5L505.8 315.2L512.8 309.5L518.5 305.8L527.8 308.2L540.5 312.8L541.8 312.8L543.2 311.2L543.8 311.2L553.8 314.8L567.2 313.5Z" fill="#22a1d5" fill-rule="evenodd"/>
<path d="M505.2 315.2L515.5 315.5L515.8 315.8L540.5 315.8L540.8 315.5L554.8 314.8L554.8 314.5L542.8 310.5L541.2 312.5L528.5 307.8L521.2 305.8L517.8 305.5L508.2 312.2Z" fill="#23a3d9" fill-rule="evenodd"/>
<path d="M682.8 338.5L674.8 337.2L662.2 338.2L651.8 341.2L645.5 343.8L635.5 349.2L628.8 353.5L612.2 366.8L596.5 382.8L582.2 400.8L568.2 422.5L559.5 438.8L550.2 460.8L543.2 484.2L540.8 496.2L539.5 507.5L539.5 523.8L542.2 538.8L544.2 544.5L549.2 553.5L555.5 560.2L558.2 561.8L558.8 560.8L558.8 558.8L557.2 556.5L557.5 556.2L567.2 556.8L576.2 555.5L585.2 552.8L594.8 548.5L593.2 546.8L589.5 546.5L596.5 542.5L606.2 535.5L612.8 529.2L617.5 523.5L621.2 517.8L624.8 509.8L627.2 499.2L627.2 495.8L625.2 496.5L624.2 495.8L623.2 491.8L619.5 484.2L625.8 474.5L631.5 463.2L636.2 450.8L639.2 439.5L642.2 440.2L653.2 440.2L659.5 439.2L660.2 441.5L665.2 438.8L670.2 435.2L678.8 425.8L685.5 414.2L688.5 405.5L689.2 405.5L688.5 409.8L684.8 424.2L679.5 439.8L673.8 453.2L664.5 471.2L652.8 489.5L645.2 499.8L633.5 513.5L620.5 526.2L619.8 527.5L623.8 528.2L639.8 512.2L654.2 494.2L667.5 473.5L677.5 454.2L684.2 438.2L689.8 420.5L693.8 401.5L695.2 387.8L695.2 378.2L694.2 368.2L690.5 354.5L687.8 348.8L684.2 343.5L684.8 343.2L686.8 343.8L689.2 343.2L690.2 341.8ZM621.2 498.5L622.2 504.5L621.8 506.8L617.2 517.2L612.2 524.2L606.8 529.8L598.2 536.8L590.8 541.5L583.2 545.5L572.5 549.8L561.5 553.2L555.2 552.2L551.5 550.2L547.2 541.8L545.2 535.2L545.5 534.2L551.8 532.8L564.5 528.5L577.2 522.5L584.5 518.2L593.5 511.8L602.5 504.2L611.5 494.8L617.2 487.8ZM688.8 404.2L689.2 403.8L689.5 404.5L689.2 404.8ZM625.8 360.8L631.8 374.8L635.5 388.2L637.5 400.8L638.2 412.8L637.5 425.8L635.5 438.5L632.5 449.8L627.8 462.2L622.8 472.2L614.2 485.5L605.2 496.2L594.5 506.2L582.2 515.2L568.2 522.8L558.5 526.8L544.5 530.8L543.2 522.8L543.2 508.5L546.2 488.2L549.8 473.8L553.8 461.8L563.2 439.8L575.2 418.2L590.2 396.5L602.5 381.8L614.5 369.8L623.5 362.2ZM676.8 341.2L680.8 345.2L685.8 353.2L686.8 356.2L688.5 368.5L688.8 381.8L688.2 389.5L686.5 399.2L683.5 409.2L679.5 417.8L675.8 423.5L666.8 432.8L655.8 436.2L640.2 436.2L639.8 434.5L641.2 426.8L641.8 415.2L641.5 403.5L640.5 394.5L635.8 374.8L633.2 367.5L628.8 358.5L635.2 353.8L642.5 349.5L653.5 344.5L666.2 341.2ZM365.5 328.2L362.8 329.5L363.8 331.2L366.2 331.8L369.2 330.8L370.2 331.2L367.5 334.5L364.5 340.2L360.5 352.8L358.8 365.8L359.5 386.8L361.5 386.2L362.5 391.2L360.5 393.5L360.5 395.5L365.5 418.5L371.5 437.2L379.2 455.8L387.2 471.8L396.8 488.2L407.8 503.8L419.2 517.2L423.2 516.8L427.8 523.5L433.5 529.8L442.8 538.2L449.8 542.5L463.2 548.2L471.5 549.8L475.2 549.8L475.5 550.2L473.5 551.5L471.8 553.8L471.8 555.8L472.5 556.5L477.2 553.8L481.5 549.8L485.2 544.8L488.8 537.2L492.2 523.8L493.2 512.8L493.2 504.2L491.5 486.5L486.8 464.2L479.5 441.2L470.8 420.5L459.5 398.8L448.5 381.5L435.5 364.5L420.2 348.5L411.8 341.5L403.2 335.5L395.2 331.2L388.5 328.5L379.2 326.5L372.2 326.5ZM422.8 493.8L437.2 508.2L452.8 519.5L469.2 527.8L485.5 533.2L485.8 534.2L484.5 537.8L480.8 544.5L478.5 546.2L471.5 546.2L460.8 543.5L452.8 539.8L439.8 530.5L430.8 521.2L426.8 515.5L423.5 509.2L421.2 502.2ZM367.2 406.8L373.5 418.2L376.8 422.5L382.5 428.2L388.8 432.5L389.5 432.5L390.2 430.5L394.8 432.2L397.8 447.2L403.5 462.8L412.5 479.8L419.8 489.8L419.2 491.5L417.8 490.5L416.5 490.5L416.5 497.8L417.8 504.5L421.5 513.2L421.2 513.8L413.2 504.5L404.5 492.8L394.5 477.2L386.8 463.2L379.5 447.2L373.5 431.5L366.8 408.2ZM415.5 349.5L432.5 366.8L442.2 379.2L450.2 390.8L461.5 410.2L467.2 421.5L474.8 439.5L483.2 465.2L488.2 489.8L489.2 499.2L489.5 511.8L488.5 522.8L486.8 529.8L475.8 526.5L459.2 518.8L448.5 512.2L436.8 502.8L428.2 494.2L418.8 482.5L410.2 468.2L404.8 456.2L401.5 446.2L397.8 428.2L397.2 421.2L397.5 401.2L399.8 386.8L404.5 371.2L411.8 355.2ZM376.2 330.2L381.8 330.5L393.5 334.5L400.8 338.5L412.2 346.8L402.8 365.2L398.2 378.2L396.2 385.8L393.5 404.2L393.8 427.8L388.5 426.2L383.2 423.5L376.5 415.8L370.8 405.8L366.2 390.8L364.5 377.2L364.5 369.5L365.5 358.8L367.5 348.2L370.8 336.5ZM399.5 262.5L399.5 267.8L400.8 272.5L403.5 277.5L407.5 282.5L416.2 289.8L430.2 297.8L440.5 302.2L451.5 305.8L467.2 309.8L490.8 313.8L515.8 315.8L540.5 315.8L565.2 313.8L588.5 309.8L607.8 304.5L619.8 299.8L628.5 295.5L636.8 290.2L640.5 287.2L646.8 280.2L649.8 274.8L651.2 270.2L651.2 266.5L648.8 267.2L647.2 269.5L646.2 273.2L641.8 266.8L637.2 262.2L629.2 256.2L614.2 248.2L595.8 241.5L583.2 238.2L565.8 234.8L549.8 232.8L535.5 231.8L509.2 231.8L483.5 234.2L463.5 237.8L442.8 243.8L426.2 251.2L418.5 255.8L412.5 260.5L407.8 265.2L404.5 269.8L403.8 269.5L402.5 263.8L400.8 262.5ZM464.5 305.2L475.5 300.2L491.2 295.5L509.8 292.8L525.2 292.8L538.8 294.5L552.5 297.8L567.5 303.5L576.2 308.2L567.8 309.8L547.2 311.8L515.8 312.2L485.8 309.5L468.8 306.5ZM552.5 293.8L555.8 281.8L561.8 270.2L565.8 264.8L571.5 259.2L577.5 254.8L580.8 253.2L585.8 252.5L597.8 252.8L605.8 254.5L612.8 256.8L626.8 263.8L636.8 270.8L643.8 276.8L642.8 279.2L638.2 284.2L632.2 288.8L626.2 292.5L618.2 296.5L606.2 301.2L583.5 307.2L582.2 307.2L569.2 300.2ZM408.5 277.8L414.8 272.2L424.5 265.2L431.2 261.2L443.5 255.5L450.8 253.2L459.2 251.5L476.2 251.5L483.8 253.5L489.5 257.5L496.2 264.2L501.2 271.2L504.2 276.8L507.8 286.8L508.2 289.2L496.2 290.8L481.8 294.2L468.8 298.8L458.8 303.8L457.8 303.8L442.2 298.8L427.8 292.5L415.8 284.8ZM406.8 273.5L410.8 267.5L418.5 260.5L428.5 254.2L438.5 249.5L451.5 244.8L468.2 240.5L483.5 237.8L509.2 235.5L535.5 235.5L549.8 236.5L565.8 238.5L581.5 241.5L594.2 244.8L610.2 250.5L618.8 254.8L617.8 255.2L607.5 251.2L594.8 248.8L585.8 248.8L575.2 250.8L568.8 253.5L570.2 255.5L562.8 262.5L555.8 272.8L552.2 280.8L548.5 293.2L532.2 289.8L525.2 289.2L512.5 289.2L508.8 278.2L504.2 268.8L499.2 261.8L493.5 256.2L495.2 254.8L487.8 250.8L476.2 247.8L459.2 247.8L453.2 248.8L441.8 252.2L424.8 260.5L415.5 266.8L407.2 273.8ZM535.8 182.5L530.5 183.5L311.5 247.8L309.8 250.2L340.8 484.8L342.2 490.8L513.8 644.2L516.2 644.8L519.5 643.5L711.8 505.2L712.8 502.5L754.5 263.8L754.5 260.8L752.5 258.2ZM535.8 186.2L750.2 261.2L750.8 262.8L708.8 502.8L516.2 641.2L345.2 488.5L313.5 251.2Z" fill="#4cc2f3" fill-rule="evenodd"/>
<path d="M692.2 341.8L686.8 339.2L680.8 337.5L676.2 337.2L675.8 336.8L665.8 337.2L656.5 339.2L651.5 340.8L645.2 343.5L635.2 348.8L626.2 354.8L617.2 361.8L611.8 366.5L599.2 379.2L586.8 393.8L580.2 402.8L571.8 415.5L564.8 427.5L559.2 438.5L559.2 439.2L554.2 449.5L549.8 460.5L545.8 472.5L542.8 483.8L540.5 495.8L539.8 503.2L539.5 503.5L539.5 506.8L539.2 507.2L539.2 524.8L539.5 525.2L539.5 528.2L539.8 528.5L540.5 534.5L543.2 543.8L546.5 550.8L548.8 554.5L555.2 561.2L558.5 563.5L563.2 565.8L567.2 567.2L572.2 568.2L583.2 568.2L583.5 567.8L585.8 567.8L590.8 566.8L599.2 564.2L605.5 561.5L615.8 555.8L623.8 550.5L632.8 543.5L638.2 538.8L651.8 525.2L663.8 510.8L671.2 500.8L678.2 490.2L686.8 475.2L692.8 463.2L700.8 443.8L704.5 432.8L708.2 418.8L709.8 408.2L710.2 407.8L710.8 399.8L711.2 399.5L711.2 394.8L711.5 394.5L711.2 378.8L710.8 378.5L710.2 371.8L708.2 363.8L705.2 356.5L702.2 351.5L700.2 348.8L695.8 344.5ZM617.5 482.2L619.8 485.5L623.2 492.8L624.8 498.5L625.8 506.2L623.5 512.8L621.2 517.5L617.5 523.2L612.8 528.8L605.8 535.5L600.2 539.8L589.8 546.2L581.5 550.2L573.8 553.2L562.8 556.5L559.2 556.5L554.5 555.5L550.8 554.2L548.5 551.2L544.8 544.2L542.8 538.5L541.5 532.5L542.8 531.8L544.2 531.8L554.2 529.2L563.5 525.8L575.5 520.2L582.8 515.8L591.8 509.5L600.8 501.8L609.2 493.2L614.8 486.2ZM622.2 475.2L624.5 480.2L626.8 488.8L627.2 499.2L626.5 500.5L624.2 491.5L620.8 484.2L618.5 480.5ZM664.8 477.2L661.8 482.5L655.8 491.5L643.8 507.2L636.5 515.5L625.8 526.2L618.2 532.8L609.5 539.5L603.5 543.5L590.5 550.5L579.8 554.5L572.5 556.2L570.5 556.2L570.2 556.5L568.5 556.2L574.8 554.2L585.5 549.8L593.8 545.5L601.2 540.8L606.8 536.5L613.8 529.8L617.5 525.5L621.2 520.2L625.8 510.5L627.5 504.5L627.8 500.5L628.2 500.2L628.2 489.8L627.8 489.5L627.8 487.5L626.5 481.8L623.2 473.2L628.5 462.8L630.8 457.2L631.5 457.2ZM662.8 439.8L662.2 440.5L656.5 443.2L648.8 445.5L642.8 446.2L642.5 446.5L634.5 446.5L634.2 446.2L634.8 444.8L635.5 440.8L636.2 440.2L639.2 440.8L641.5 440.8L641.8 441.2L653.8 441.2L654.2 440.8L660.2 440.2L661.8 439.5ZM662.8 439.5L663.2 439.2L663.5 439.5L663.2 439.8ZM693.5 367.2L694.5 371.5L694.8 378.8L695.2 379.2L694.8 392.5L694.5 392.8L694.2 398.8L693.8 399.2L692.8 407.2L689.8 420.2L685.5 434.2L679.2 450.2L668.8 470.8L666.5 474.8L665.8 475.5L665.2 475.5L632.5 456.2L631.5 454.8L633.2 450.5L633.5 448.5L634.2 447.5L643.5 447.5L643.8 447.2L648.2 446.8L654.8 445.2L659.8 443.2L664.8 440.5L670.8 436.2L677.2 429.8L679.8 426.5L683.5 420.8L688.2 410.8L691.2 400.8L692.5 393.8L692.8 388.5L693.2 388.2L693.2 383.8L693.5 383.5L693.5 372.2L693.2 371.8L693.2 367.5ZM693.2 365.5L693.5 365.8L693.2 367.2L692.8 366.8ZM623.8 358.5L629.2 369.5L633.2 381.2L636.5 396.5L637.2 405.2L637.5 405.5L637.5 413.2L637.8 413.5L637.5 414.2L637.2 425.5L636.8 425.8L636.8 428.5L636.5 428.8L636.5 430.8L636.2 431.2L635.2 438.2L632.2 449.5L627.5 461.8L622.5 471.8L613.8 485.2L604.8 495.8L594.2 505.8L581.8 514.8L574.5 519.2L567.8 522.5L560.8 525.5L553.2 528.2L541.5 531.2L540.8 529.2L540.5 523.8L540.2 523.5L540.2 508.2L540.5 507.8L540.5 504.5L540.8 504.2L541.5 496.8L541.8 496.5L543.2 487.8L546.8 473.5L550.8 461.5L555.2 450.5L560.2 440.2L560.2 439.5L565.8 428.5L572.8 416.5L581.2 403.8L587.8 394.8L600.2 380.2L612.8 367.5ZM690.8 342.8L694.5 345.5L699.2 350.2L704.2 357.8L706.8 364.2L708.8 371.5L709.5 376.8L709.8 377.2L710.2 384.2L710.5 384.5L710.5 393.5L710.2 393.8L709.8 401.8L709.5 402.2L709.5 404.5L709.2 404.8L708.2 412.8L703.5 431.8L699.8 442.8L694.8 455.5L691.8 461.5L691.8 462.2L682.2 480.8L670.2 499.8L662.8 509.8L653.5 521.2L637.2 537.8L629.8 544.2L620.5 551.2L611.5 556.8L601.5 561.8L594.5 564.5L584.8 566.8L582.5 566.8L582.2 567.2L573.5 567.2L573.2 566.8L571.5 566.8L564.5 564.8L559.8 562.5L556.5 560.2L553.2 556.8L553.5 556.5L557.8 557.5L560.8 557.5L561.2 557.8L567.8 557.8L568.2 557.5L571.2 557.5L571.5 557.2L576.8 556.5L585.8 553.8L591.5 551.5L601.2 546.5L610.5 540.5L619.2 533.8L626.8 527.2L637.5 516.5L646.5 506.2L656.8 492.5L668.5 474.2L678.5 454.8L684.2 441.5L689.5 425.8L693.8 408.2L694.8 400.2L695.2 399.8L695.5 393.8L695.8 393.5L695.8 388.8L696.2 388.5L696.2 377.8L695.8 377.5L695.8 373.2L695.5 372.8L695.2 367.8L693.5 360.2L690.5 351.8L685.8 343.8L681.8 339.5L682.5 339.2L685.5 340.2ZM678.5 338.5L683.8 343.8L687.8 349.8L690.2 354.8L691.2 360.2L691.2 362.2L691.5 362.5L691.5 364.8L691.8 365.2L692.2 373.2L692.5 373.5L692.5 382.5L692.2 382.8L691.8 390.2L691.5 390.5L691.5 392.8L690.2 399.8L686.5 411.5L682.5 419.8L678.8 425.5L676.2 428.8L668.8 435.8L661.8 438.5L655.5 439.8L653.2 439.8L652.8 440.2L643.2 440.2L642.8 439.8L636.5 439.2L636.2 437.8L637.8 429.5L638.2 423.2L638.5 422.8L638.5 415.2L638.8 414.8L638.5 404.2L638.2 403.8L637.5 395.2L637.2 394.8L636.2 387.8L632.8 375.5L630.2 368.2L625.2 357.5L636.2 349.8L646.2 344.5L652.5 341.8L657.5 340.2L666.8 338.2L674.5 337.8L674.8 338.2ZM363.5 328.5L358.2 331.8L353.5 336.5L350.2 341.5L347.5 347.2L344.5 357.5L343.8 363.5L343.5 363.8L343.2 371.8L342.8 372.2L342.8 382.2L343.2 382.5L343.5 391.8L343.8 392.2L343.8 394.8L344.2 395.2L345.2 404.2L347.2 414.2L350.5 427.2L357.8 448.8L364.2 463.8L367.2 469.5L367.2 470.2L375.8 486.5L383.2 498.5L390.5 509.2L398.2 519.2L404.2 526.2L412.8 535.2L421.5 542.8L429.5 548.8L437.8 553.8L446.2 557.5L450.5 558.8L455.5 559.8L462.2 560.2L462.5 559.8L467.5 559.5L473.5 557.5L477.8 554.8L482.5 550.5L486.2 545.5L489.8 537.8L491.5 532.5L493.2 524.5L493.5 519.2L493.8 518.8L493.8 513.8L494.2 513.5L494.2 503.8L493.8 503.5L493.8 497.8L493.5 497.5L493.5 494.2L493.2 493.8L492.5 486.2L492.2 485.8L492.2 484.2L490.2 473.5L487.8 463.8L484.8 454.5L484.8 453.5L480.5 440.8L471.8 420.2L460.5 398.5L454.2 388.2L446.2 376.5L438.2 366.2L431.5 358.5L421.2 348.2L416.2 343.8L409.2 338.5L402.5 334.2L396.2 330.8L389.5 328.2L380.2 326.2L371.8 326.2L371.5 326.5L368.2 326.8ZM426.8 524.2L427.2 523.8L427.5 524.2L427.2 524.5ZM426.5 523.8L426.8 523.5L427.2 523.8L426.8 524.2ZM426.2 523.5L426.5 523.2L426.8 523.5L426.5 523.8ZM421.5 488.2L422.2 487.8L428.2 495.2L436.5 503.5L442.8 508.8L452.2 515.5L458.8 519.5L470.5 525.2L482.5 529.5L483.5 529.5L488.5 531.2L489.8 531.2L490.2 532.5L488.2 538.5L485.2 544.5L482.8 547.8L481.5 549.2L480.5 549.5L472.5 549.8L472.2 549.5L468.2 549.2L460.2 546.8L456.2 545.2L448.8 541.2L442.2 536.5L434.5 529.8L428.5 523.2L424.5 517.5L420.5 509.8L418.2 502.8L418.5 498.2L419.8 492.5ZM418.5 482.8L420.5 485.5L420.8 486.8L418.8 491.5L417.5 497.2L417.2 496.8L416.8 491.5L417.2 491.2L417.8 483.8ZM386.8 467.8L405.2 458.8L405.8 459.2L410.2 469.2L415.5 478.5L417.5 481.2L416.5 484.5L416.2 490.2L415.8 490.5L415.8 494.8L416.2 495.2L416.2 498.8L416.5 499.2L416.8 502.8L419.5 511.2L422.5 517.2L426.5 522.8L426.2 523.5L413.8 510.2L402.2 494.8L395.2 484.2L386.5 468.8ZM388.2 431.5L388.8 431.2L393.2 432.8L398.5 433.8L399.2 436.8L398.8 437.2L392.2 434.2ZM387.5 431.2L387.8 430.8L388.2 431.2L387.8 431.5ZM417.8 347.8L419.8 349.2L430.5 359.8L435.5 365.5L445.2 377.8L453.2 389.5L464.5 408.8L470.8 421.5L478.5 439.5L483.8 454.8L483.8 455.8L486.8 465.2L489.2 474.8L491.2 485.5L491.2 487.2L491.5 487.5L491.5 489.5L491.8 489.8L492.5 498.8L492.8 499.2L493.2 512.5L492.8 512.8L492.8 517.8L492.5 518.2L492.2 523.5L491.2 528.8L490.5 530.2L483.8 528.5L476.8 526.2L469.5 523.2L460.2 518.5L449.5 511.8L437.8 502.5L429.2 493.8L419.8 482.2L411.2 467.8L405.8 455.8L402.5 445.8L400.2 436.2L399.2 428.2L398.8 427.8L398.5 421.2L398.2 420.8L398.5 401.8L398.8 401.5L399.2 396.5L399.5 396.2L400.8 387.5L402.8 379.8L405.5 371.8L408.5 364.5L412.8 355.8ZM363.2 346.8L363.5 348.2L362.5 351.5L362.5 353.2L361.5 357.5L361.5 359.8L361.2 360.2L361.2 363.2L360.8 363.5L360.5 379.2L360.8 379.5L360.8 383.8L361.2 384.2L361.2 386.5L361.5 386.8L362.2 392.8L365.5 404.5L370.2 414.5L376.5 423.5L382.2 429.2L386.5 432.5L390.8 435.2L399.8 439.2L399.8 440.5L401.5 447.2L403.8 454.5L404.8 456.5L404.5 457.8L386.2 466.8L384.5 465.2L379.8 455.5L372.2 436.8L366.2 418.2L361.8 399.2L360.8 390.8L360.5 390.5L360.2 384.5L359.8 384.2L359.5 366.5L359.8 366.2L359.8 362.2L360.2 361.8L360.8 355.2L361.8 351.8L361.8 350.5ZM363.2 346.2L363.5 345.8L363.8 346.5L363.5 346.8ZM363.5 345.2L363.8 344.8L364.2 345.2L363.8 345.5ZM364.5 329.5L370.8 327.5L372.5 327.8L369.8 330.5L366.2 335.8L363.2 342.2L360.2 352.5L359.5 358.2L359.2 358.5L359.2 360.8L358.8 361.2L358.8 365.2L358.5 365.5L358.5 380.8L358.8 381.2L358.8 385.5L359.2 385.8L359.5 391.8L359.8 392.2L360.2 396.5L362.5 408.8L367.8 428.5L373.8 445.2L378.8 456.8L381.8 462.5L381.8 463.2L391.2 480.5L401.2 496.2L409.8 507.8L421.2 520.8L432.8 531.8L442.5 539.2L449.5 543.5L458.8 547.8L466.8 550.2L470.8 550.5L471.2 550.8L479.2 550.8L479.8 550.5L480.2 550.8L478.5 552.5L472.5 556.5L466.5 558.5L461.5 558.8L461.2 559.2L454.8 558.5L449.5 557.2L441.8 554.2L436.2 551.2L428.5 546.2L420.8 540.2L414.2 534.2L405.2 524.8L399.2 517.8L391.5 507.8L384.2 497.2L376.8 485.2L368.2 468.8L368.2 468.2L365.2 462.5L358.8 447.5L351.5 425.8L348.2 412.8L346.2 402.8L345.2 393.8L344.8 393.5L344.8 390.8L344.5 390.5L344.2 381.2L343.8 380.8L343.8 373.2L344.2 372.8L344.2 367.8L344.5 367.5L344.8 362.5L346.8 353.2L349.2 346.5L351.2 342.5L354.5 337.5L359.2 332.8ZM375.2 327.2L378.8 327.2L379.2 327.5L383.2 327.8L388.2 329.2L394.8 331.8L401.2 335.2L407.8 339.5L414.8 344.8L416.8 346.8L411.8 354.8L407.5 363.5L404.5 370.8L401.8 378.8L399.8 386.5L398.5 395.2L398.2 395.5L398.2 397.8L397.5 400.8L397.5 404.5L397.2 404.8L397.2 422.2L397.5 422.5L397.8 429.2L398.5 431.8L398.2 432.5L394.5 431.8L387.8 429.5L381.8 426.5L377.5 422.2L372.2 414.8L367.8 406.5L364.8 398.2L363.2 391.5L362.5 385.5L362.2 385.2L362.2 382.8L361.8 382.5L361.5 369.2L361.8 368.8L362.2 361.2L362.5 360.8L362.5 358.5L362.8 358.2L363.5 352.5L365.8 342.5L368.2 335.2L370.8 331.5ZM398.8 263.8L399.2 268.8L400.5 273.5L403.2 278.5L407.2 283.5L415.8 290.8L422.2 294.8L429.8 298.8L440.2 303.2L451.2 306.8L466.8 310.8L475.2 312.5L482.8 313.5L483.2 313.8L490.2 314.5L490.5 314.8L503.5 315.8L503.8 316.2L515.2 316.5L515.5 316.8L541.2 316.8L541.5 316.5L547.8 316.5L548.2 316.2L552.5 316.2L552.8 315.8L556.5 315.8L556.8 315.5L565.8 314.8L566.2 314.5L568.5 314.5L568.8 314.2L579.2 312.8L589.2 310.8L608.5 305.5L620.5 300.8L629.2 296.5L635.2 292.8L641.2 288.2L645.5 283.8L649.2 278.8L651.8 272.5L652.2 268.5L652.5 268.2L652.2 262.5L651.5 259.8L648.8 254.2L644.8 248.8L639.2 243.5L634.2 239.8L627.5 235.8L620.2 232.2L612.2 228.8L602.5 225.5L584.8 220.8L576.5 219.2L568.8 218.2L568.5 217.8L564.2 217.5L563.8 217.2L552.2 216.2L551.8 215.8L548.2 215.8L547.8 215.5L537.5 215.2L537.2 214.8L508.5 214.8L508.2 215.2L502.5 215.2L502.2 215.5L497.8 215.5L497.5 215.8L487.5 216.5L487.2 216.8L475.5 218.2L463.2 220.5L449.8 223.8L440.5 226.8L439.5 227.5L433.5 229.5L424.2 233.8L417.8 237.5L410.2 243.2L405.8 247.5L402.2 252.5L399.5 258.8L399.2 263.5ZM461.8 307.8L468.8 304.2L476.2 301.2L484.2 298.5L491.8 296.5L500.5 295.2L500.8 294.8L510.2 294.2L510.5 293.8L524.8 293.8L525.2 294.2L528.8 294.2L529.2 294.5L531.8 294.5L532.2 294.8L538.5 295.5L552.2 298.8L567.2 304.5L579.5 311.2L578.2 311.8L572.2 312.5L569.8 313.2L559.2 314.2L558.8 314.5L555.8 314.5L555.5 314.8L551.8 314.8L551.5 315.2L540.5 315.5L540.2 315.8L516.8 315.8L516.5 315.5L510.2 315.5L509.8 315.2L497.8 314.5L497.5 314.2L494.8 314.2L494.5 313.8L484.5 312.8L484.2 312.5L482.5 312.5L482.2 312.2L480.5 312.2L468.2 309.8L466.5 309.2L462.5 308.5ZM642.5 269.5L642.8 269.2L643.2 269.5L642.8 269.8ZM642.2 269.2L642.5 268.8L642.8 269.2L642.5 269.5ZM641.8 268.8L642.2 268.5L642.5 268.8L642.2 269.2ZM494.2 254.8L495.8 255.5L503.2 260.8L508.5 266.2L512.2 270.8L515.2 275.5L519.5 284.5L521.8 291.5L521.5 292.8L514.2 292.8L513.8 292.5L512.5 285.5L510.5 279.5L506.5 270.8L501.5 263.2L497.5 258.5L493.8 255.2ZM493.5 254.8L493.8 254.5L494.2 254.8L493.8 255.2ZM493.2 254.5L493.5 254.2L493.8 254.5L493.5 254.8ZM571.2 253.5L571.5 253.8L568.8 255.8L562.5 262.2L558.5 267.5L555.5 272.5L552.5 278.8L549.5 287.5L547.8 295.8L546.5 296.2L539.5 294.5L539.2 293.8L540.2 290.2L543.2 282.2L546.2 276.2L550.5 269.5L553.8 265.5L559.5 260.2L565.8 255.8L570.5 253.5ZM571.2 253.5L571.5 253.2L571.8 253.5L571.5 253.8ZM571.8 253.2L572.2 252.8L572.5 253.2L572.2 253.5ZM548.8 296.5L550.5 288.5L552.8 281.5L556.5 273.5L559.5 268.5L563.5 263.2L569.8 256.8L577.5 251.5L581.5 250.2L586.2 249.8L586.5 249.5L597.5 249.8L607.2 251.8L615.8 254.8L624.8 259.2L634.8 265.5L645.5 274.2L647.2 275.8L647.8 277.5L647.5 278.8L645.8 281.2L640.2 287.2L634.2 291.8L628.2 295.5L619.5 299.8L607.5 304.5L593.8 308.5L585.2 310.2L583.5 310.8L581.8 310.8L575.8 307.2L563.8 301.5ZM404.5 277.5L413.2 269.8L419.8 264.8L429.5 258.8L439.2 254.2L447.5 251.2L457.5 248.8L462.5 248.5L462.8 248.2L475.8 248.5L481.2 249.5L485.8 251.2L491.5 255.2L499.2 262.8L504.2 269.8L507.8 276.8L511.5 286.8L512.8 292.5L512.5 292.8L499.8 293.8L485.5 296.8L475.2 300.2L467.8 303.2L459.5 307.5L458.5 307.5L441.5 302.2L426.5 295.5L420.2 291.8L412.8 286.5L408.2 282.2ZM534.5 232.8L535.2 232.5L535.5 232.8L541.2 232.8L541.5 233.2L549.5 233.5L549.8 233.8L552.8 233.8L553.2 234.2L555.8 234.2L556.2 234.5L565.5 235.5L565.8 235.8L567.5 235.8L579.8 238.2L595.5 242.2L611.5 247.8L623.8 253.8L628.8 256.8L634.8 261.2L642.2 268.5L641.5 268.8L636.2 264.5L626.2 258.2L619.5 254.8L610.8 251.5L604.5 249.8L599.2 249.2L598.8 248.8L596.2 248.8L595.8 248.5L585.5 248.5L585.2 248.8L582.5 248.8L582.2 249.2L578.8 249.5L572.8 251.2L564.8 254.8L561.2 257.2L556.2 261.2L549.5 268.5L545.2 275.2L541.2 283.5L539.2 289.2L538.2 293.8L537.8 294.2L533.8 293.8L533.5 293.5L533.5 279.5L533.8 279.2ZM533.5 232.8L532.8 278.2L532.5 278.5L532.5 293.2L532.2 293.5L526.5 293.2L523.2 292.5L522.8 290.2L520.5 283.2L516.2 274.2L511.2 266.8L504.5 259.8L497.2 254.5L492.8 252.2L484.8 249.2L477.2 247.5L474.5 247.5L474.2 247.2L461.8 247.2L461.5 247.5L458.8 247.5L458.5 247.8L452.8 248.5L441.5 251.8L435.8 254.2L424.5 260.2L412.2 268.8L404.5 275.8L403.8 276.2L403.2 275.5L403.2 274.2L404.5 271.5L408.5 265.8L413.2 261.2L419.2 256.5L426.8 251.8L432.2 249.2L440.8 245.5L450.5 242.2L467.2 237.8L477.8 235.8L479.5 235.8L479.8 235.5L483.8 235.2L484.2 234.8L489.2 234.5L489.5 234.2L499.2 233.5L499.5 233.2L503.5 233.2L503.8 232.8L509.5 232.8L509.8 232.5L533.2 232.5ZM400.2 261.5L401.5 256.8L404.5 251.5L406.8 248.5L413.2 242.5L418.8 238.5L425.2 234.8L432.2 231.5L441.5 227.8L450.8 224.8L461.2 222.2L474.5 219.5L482.8 218.5L483.2 218.2L491.2 217.5L491.5 217.2L494.8 217.2L495.2 216.8L498.5 216.8L498.8 216.5L509.2 216.2L509.5 215.8L535.8 215.8L536.2 216.2L541.8 216.2L542.2 216.5L553.8 217.2L554.2 217.5L562.5 218.2L562.8 218.5L564.8 218.5L565.2 218.8L575.2 220.2L583.5 221.8L586.5 222.8L587.8 222.8L597.8 225.5L608.2 228.8L615.8 231.8L630.2 239.2L635.2 242.5L640.2 246.5L643.8 250.2L647.8 255.5L650.5 261.2L651.5 267.2L651.2 267.5L650.8 271.5L648.8 276.2L647.5 273.2L644.2 268.2L636.2 260.2L632.2 257.2L625.2 252.8L619.5 249.8L609.5 245.5L592.2 239.8L572.8 235.5L560.2 233.8L559.8 233.5L554.5 233.2L554.2 232.8L542.8 232.2L542.5 231.8L536.8 231.8L536.5 231.5L508.8 231.5L508.5 231.8L502.8 231.8L502.5 232.2L491.5 232.8L491.2 233.2L483.2 233.8L480.8 234.5L472.8 235.5L464.5 237.5L463.2 237.5L449.5 241.2L439.8 244.5L431.2 248.2L425.8 250.8L418.2 255.5L412.2 260.2L407.5 264.8L404.5 268.8L402.2 273.2L401.5 272.2L400.2 267.5ZM536.8 186.2L534.2 186.2L532.8 186.8L531.8 186.8L523.8 189.5L518.2 190.8L504.5 195.2L498.8 196.5L490.8 199.2L485.2 200.5L477.2 203.2L471.5 204.5L463.5 207.2L457.8 208.5L449.8 211.2L444.2 212.5L436.2 215.2L430.5 216.5L416.8 220.8L411.2 222.2L403.2 224.8L397.5 226.2L389.5 228.8L383.8 230.2L375.8 232.8L370.2 234.2L367.8 235.2L364.5 235.8L362.2 236.8L356.5 238.2L354.2 239.2L350.8 239.8L348.5 240.8L347.5 240.8L342.8 242.5L341.8 242.5L313.5 250.8L345.2 489.5L515.8 641.8L516.8 641.8L709.5 503.5L711.5 490.8L712.5 486.8L712.5 485.2L713.2 483.2L713.8 477.5L714.5 475.5L715.2 469.8L715.8 467.8L716.2 464.2L716.8 462.2L717.5 456.5L718.2 454.5L718.8 448.8L720.5 441.2L721.2 435.5L722.8 427.8L723.5 422.2L724.2 420.2L724.8 414.5L726.5 406.8L727.2 401.2L727.8 399.2L728.5 393.5L730.2 385.8L730.8 380.2L731.5 378.2L732.2 372.5L733.8 364.8L734.5 359.2L735.2 357.2L735.8 351.5L737.5 343.8L738.2 338.2L738.8 336.2L739.5 330.5L741.2 322.8L741.8 317.2L742.5 315.2L743.2 309.5L744.8 301.8L745.5 296.2L746.2 294.2L746.8 288.5L748.5 280.8L749.2 275.2L749.8 273.2L750.5 267.5L751.5 263.5L751.5 261.5L749.5 260.5L742.8 258.5L741.8 257.8L736.2 256.2L735.2 255.5L729.5 253.8L728.5 253.2L688.5 239.5L687.5 238.8L681.8 237.2L680.8 236.5L640.8 222.8L639.8 222.2L634.2 220.5L633.2 219.8L627.5 218.2L626.5 217.5L620.8 215.8L619.8 215.2L614.2 213.5L613.2 212.8L586.5 203.8L585.5 203.2L579.8 201.5L578.8 200.8L573.2 199.2L572.2 198.5L566.5 196.8L565.5 196.2L559.8 194.5L558.8 193.8L553.2 192.2L552.2 191.5L546.5 189.8L545.5 189.2L539.8 187.5ZM749.8 263.2L750.2 264.5L749.5 266.5L748.8 272.2L748.2 274.2L747.5 279.8L745.8 287.5L745.2 293.2L744.5 295.2L743.8 300.8L742.2 308.5L741.5 314.2L740.8 316.2L740.2 321.8L738.5 329.5L737.8 335.2L737.2 337.2L736.5 342.8L734.8 350.5L734.2 356.2L733.5 358.2L732.8 363.8L731.2 371.5L730.5 377.2L729.8 379.2L729.2 384.8L727.5 392.5L726.8 398.2L726.2 400.2L725.5 405.8L723.8 413.5L723.2 419.2L722.5 421.2L721.8 426.8L720.2 434.5L719.5 440.2L718.8 442.2L718.5 445.8L717.8 447.8L717.2 453.5L716.5 455.5L715.8 461.2L715.2 463.2L714.8 466.8L714.2 468.8L713.5 474.5L712.8 476.5L712.8 478.2L712.5 478.5L712.5 480.2L711.5 484.2L711.5 485.8L710.5 489.8L708.5 502.5L517.2 639.8L516.8 638.2L517.2 637.8L517.2 610.2L517.5 609.8L517.5 582.2L517.8 581.8L517.8 554.2L518.2 553.8L518.2 526.5L518.5 526.2L518.5 498.5L518.8 498.2L518.8 470.5L519.2 470.2L519.2 442.5L519.5 442.2L520.2 369.2L524.5 366.8L533.2 363.2L536.8 361.2L537.5 361.2L541.2 359.2L541.8 359.2L545.5 357.2L546.2 357.2L558.5 351.2L562.8 349.5L566.5 347.5L567.2 347.5L570.8 345.5L571.5 345.5L575.2 343.5L575.8 343.5L579.5 341.5L580.2 341.5L583.8 339.5L596.8 333.8L600.5 331.8L601.2 331.8L604.8 329.8L605.5 329.8L609.2 327.8L609.8 327.8L613.5 325.8L626.5 320.2L630.2 318.2L630.8 318.2L634.5 316.2L635.2 316.2L638.8 314.2L639.5 314.2L643.2 312.2L643.8 312.2L647.5 310.2L648.2 310.2L651.8 308.2L660.5 304.5L664.2 302.5L664.8 302.5L668.5 300.5L669.2 300.5L672.8 298.5L673.5 298.5L677.2 296.5L677.8 296.5L681.5 294.5L690.2 290.8L693.8 288.8L694.5 288.8L698.2 286.8L698.8 286.8L702.5 284.8L703.2 284.8L706.8 282.8L707.5 282.8L711.2 280.8L711.8 280.8L715.5 278.8L716.2 278.8ZM315.2 252.8L519.2 369.2L518.5 441.2L518.2 441.5L518.2 469.2L517.8 469.5L517.8 497.2L517.5 497.5L517.5 525.2L517.2 525.5L517.2 552.8L516.8 553.2L516.8 580.8L516.5 581.2L516.5 608.8L516.2 609.2L516.2 636.8L515.5 639.2L346.2 488.2L344.8 476.2L344.2 473.5L344.2 471.2L343.5 468.5L343.5 466.2L342.8 463.5L342.8 461.2L342.2 458.5L342.2 456.2L341.5 453.5L341.5 451.2L340.8 448.5L340.8 446.2L340.2 443.5L340.2 441.2L339.5 438.5L339.5 436.2L338.8 433.5L338.8 431.2L338.2 428.5L338.2 426.2L337.5 423.5L337.5 421.2L336.8 418.5L336.8 416.2L336.2 413.5L336.2 411.2L335.5 408.5L335.5 406.2L334.8 403.5L334.8 401.2L334.2 398.5L334.2 396.2L333.5 393.5L333.5 391.2L332.8 388.5L332.8 386.2L332.2 383.5L332.2 381.2L331.5 378.5L331.5 376.2L330.8 373.5L330.8 371.2L330.2 368.5L330.2 366.2L329.5 363.5L329.5 361.2L328.8 358.5L328.8 356.2L328.2 353.5L328.2 351.2L327.5 348.5L327.5 346.2L326.8 343.5L326.8 341.2L326.2 338.5L326.2 336.2L325.5 333.5L325.5 331.2L324.8 328.5L324.8 326.2L324.2 323.5L324.2 321.2L323.5 318.5L323.5 316.2L322.8 313.5L322.8 311.2L322.2 308.5L322.2 306.2L321.5 303.5L321.5 301.2L320.8 298.5L320.8 296.2L320.2 293.5L320.2 291.2L319.5 288.5L319.5 286.2L318.8 283.5L318.8 281.2L318.2 278.5L318.2 276.2L317.5 273.5L317.5 271.2L316.8 268.5L316.8 266.2L316.2 263.5L316.2 261.2L315.5 258.5L315.5 256.2L314.8 253.5ZM748.5 262.2L744.8 264.2L744.2 264.2L723.2 274.2L718.8 275.8L689.2 289.8L684.8 291.5L659.5 303.5L655.2 305.2L625.5 319.2L621.2 320.8L595.8 332.8L591.5 334.5L561.8 348.5L557.5 350.2L532.2 362.2L527.8 363.8L519.8 367.8L322.5 255.2L317.8 252.8L316.5 251.5L324.5 248.8L330.2 247.5L338.2 244.8L343.8 243.5L357.5 239.2L363.2 237.8L371.2 235.2L376.8 233.8L379.2 232.8L390.5 229.8L392.8 228.8L404.2 225.8L406.5 224.8L417.8 221.8L420.2 220.8L423.5 220.2L425.8 219.2L437.2 216.2L439.5 215.2L442.8 214.5L445.2 213.5L450.8 212.2L453.2 211.2L456.5 210.5L458.8 209.5L464.5 208.2L466.8 207.2L470.2 206.5L472.5 205.5L478.2 204.2L480.5 203.2L483.8 202.5L486.2 201.5L491.8 200.2L494.2 199.2L497.5 198.5L499.8 197.5L505.5 196.2L507.8 195.2L511.2 194.5L513.5 193.5L516.8 192.8L519.2 191.8L520.2 191.8L535.5 187.2L538.5 188.5L544.2 190.2L545.2 190.8L550.8 192.5L551.8 193.2L557.5 194.8L558.5 195.5L564.2 197.2L565.2 197.8L570.8 199.5L571.8 200.2L577.5 201.8L578.5 202.5L584.2 204.2L585.2 204.8L618.5 216.2L619.5 216.8L625.2 218.5L626.2 219.2L631.8 220.8L632.8 221.5L638.5 223.2L639.5 223.8L679.5 237.5L680.5 238.2L686.2 239.8L687.2 240.5L727.2 254.2L728.2 254.8L733.8 256.5L734.8 257.2L740.5 258.8L741.5 259.5L748.2 261.5Z" fill="#1c1c1c" fill-rule="evenodd"/>
<g fill="none" stroke="#3a1216" stroke-width="0.8" stroke-dasharray="4 3" opacity="0.55">
 <path d="M529.1 257 L526.8 387"/>
 <path d="M527 392 L525.5 470"/>
 <path d="M395 463.5 L475 427"/>
 <path d="M570 420 L703 500.4"/>
 <path d="M348 487 L400 466"/>
 <path d="M670 482 L706 502"/>
</g>
<path d="M530.2 207.5 C531.5 213 534.5 219 535.8 223 C536 225.5 534 226 530 226 C526 226 524 225.5 524.2 223 C525.5 219 528.8 213 530.2 207.5 Z" fill="#1e1e1e"/>
<path d="M530 226 V229" stroke="#1e1e1e" stroke-width="0.8"/>
<g stroke="#2a2a2a" stroke-width="1.1" fill="#e6e6e6">
 <circle cx="529.2" cy="255.7" r="3.3"/>
 <circle cx="531.2" cy="397.2" r="2.8"/>
 <circle cx="343.4" cy="489.6" r="4.3"/>
 <circle cx="516" cy="643.6" r="4.6"/>
 <circle cx="710.7" cy="504" r="4.3"/>
</g>
<g fill="#1e1e1e">
 <circle cx="444.9" cy="439.5" r="2.2"/>
 <circle cx="611.7" cy="445.2" r="2.2"/>
 <circle cx="419.7" cy="557.2" r="2.6"/>
 <circle cx="623.7" cy="566.5" r="2.6"/>
</g>
<g fill="none" stroke="#8a8a8a" stroke-width="3.2" opacity="0.9">
 <path d="M303 234.5 C296 236.5 292.5 242 293 251"/>
 <path d="M762 243 C769 246 773.5 252 773 262"/>
</g>
<g fill="#8a8a8a" opacity="0.9">
 <path d="M309.5 231 L301.5 229 L303.5 237.5 Z"/>
 <path d="M293.4 256.5 L288.5 249 L297.5 249.5 Z"/>
 <path d="M757 240 L765.5 238.5 L763 247 Z"/>
 <path d="M771.5 268.6 L768 260 L777 261 Z"/>
</g>
<path d="M503.5 659.5 C508 664.5 524 664.5 528.5 659.5" fill="none" stroke="#1e1e1e" stroke-width="3"/>
<path d="M499.8 656 L508.5 657.5 L502.5 664 Z M531.5 656.5 L530 665 L523 658.5 Z" fill="#1e1e1e"/>
</svg></div>

<div id="top" class="abs">
 <svg class="abs" style="left:13px;top:0" width="60" height="60" viewBox="0 0 60 60">
  <defs><clipPath id="lc"><rect x="0" y="0" width="60" height="60" rx="12"/></clipPath></defs>
  <g clip-path="url(#lc)">
   <rect x="0" y="0" width="60" height="60" fill="#37b0e6"/>
   <path d="M48 12 L60 24 L60 60 L37 60 L12 36 L12 36 Z" fill="#2b95c8" opacity="0.75"/>
  </g>
  <rect x="12" y="12.7" width="11" height="11" fill="#ef5b3c"/>
  <rect x="24.9" y="12.7" width="11" height="11" fill="#f5884a"/>
  <rect x="37.1" y="12.7" width="11" height="11" fill="#f8a355"/>
  <rect x="12" y="25" width="11" height="11" fill="#3fb15a"/>
  <rect x="24.9" y="25" width="11" height="11" fill="#8cc641"/>
  <rect x="37.1" y="25" width="11" height="11" fill="#c4d93a"/>
  <rect x="12" y="37.7" width="11" height="11" fill="#1c6db3"/>
  <rect x="24.9" y="37.7" width="11" height="11" fill="#5dbbeb"/>
  <rect x="37.1" y="37.7" width="11" height="11" fill="#a6dbf6"/>
  <g fill="#fff" font-family="Liberation Sans" font-weight="bold" font-size="9.5" text-anchor="middle">
   <text x="17.5" y="21.6">T</text><text x="30.4" y="21.6">I</text><text x="42.6" y="21.6">N</text>
   <text x="17.5" y="33.9">K</text><text x="30.4" y="33.9">E</text><text x="42.6" y="33.9">R</text>
   <text x="17.5" y="46.6">C</text><text x="30.4" y="46.6">A</text><text x="42.6" y="46.6">D</text>
  </g>
 </svg>
 <div class="nav" style="left:94px">Design</div>
 <div class="sep" style="left:155px"></div>
 <div class="nav" style="left:172px">Edit</div>
 <div class="sep" style="left:213px"></div>
 <div class="nav" style="left:230px">Help</div>
 <div class="sep" style="left:276px"></div>
 <svg class="abs" style="left:0;top:0" width="1151" height="52">
  <g fill="#545a60">
   <!-- undo -->
   <path d="M680 11.7 L680 20.5 L688.5 20.5 L685.6 17.7 C689.6 15.6 694.5 18.2 694.3 22.6 C694.2 24.2 693.6 25.5 692.6 26.6 L695.2 26.8 C696.5 25.5 697.2 23.8 697.2 22 C697.2 16.3 690.5 12.7 684.6 16.5 Z"/>
   <!-- redo -->
   <path d="M755.3 11.7 L755.3 20.5 L746.8 20.5 L749.7 17.7 C745.7 15.6 740.8 18.2 741 22.6 C741.1 24.2 741.7 25.5 742.7 26.6 L740.1 26.8 C738.8 25.5 738.1 23.8 738.1 22 C738.1 16.3 744.8 12.7 750.7 16.5 Z"/>
   <!-- adjust: ruler -->
   <g transform="rotate(-43 829 18.6)"><path d="M814.5 18.6 L822 16 H838 C839.6 16 840.2 16.8 840.2 18.6 C840.2 20.4 839.6 21.2 838 21.2 H822 Z"/></g>
   <g transform="rotate(44 829.5 18.2)"><rect x="816.5" y="14.9" width="26" height="6.6" rx="1"/></g>
   <!-- group -->
   <path d="M901.3 28.7 L908.6 16.7 L912.3 21.6 L917.5 12.8 L927.1 28.7 Z"/>
   <!-- ungroup -->
   <path d="M958.8 28.7 L966.5 16.7 L973.5 28.7 Z"/>
  </g>
  <path d="M973.5 28.7 L967.8 19 L975 12.7 L985.1 28.7 Z" fill="#a2a6aa"/>
  <path d="M975 12.7 L985.1 28.7" stroke="#6f7478" stroke-width="0.8"/>
  <path d="M842.6 16.3 L849 16.3 L845.8 22 Z" fill="#bdbdbd"/>
  <g stroke="#efeeec" stroke-width="0.9">
   <g transform="rotate(44 829.5 18.2)"><path d="M820 14.9 V17.5 M823.3 14.9 V16.8 M826.6 14.9 V17.5 M832.6 14.9 V17.5 M835.9 14.9 V16.8 M839.2 14.9 V17.5"/></g>
  </g>
  <!-- view icons -->
  <rect x="1020" y="8" width="1" height="35.5" fill="#d3d1ce"/>
  <g transform="rotate(6 1047 23.6)">
   <rect x="1036" y="12.6" width="22" height="22" fill="#f5f5f5" stroke="#777" stroke-width="1.6"/>
   <path d="M1047 12.6 V34.6 M1036 23.6 H1058" stroke="#777" stroke-width="1.3"/>
   <path d="M1038.75 12.6V34.6M1041.5 12.6V34.6M1044.25 12.6V34.6M1049.75 12.6V34.6M1052.5 12.6V34.6M1055.25 12.6V34.6M1036 15.35H1058M1036 18.1H1058M1036 20.85H1058M1036 26.35H1058M1036 29.1H1058M1036 31.85H1058" stroke="#bbb" stroke-width="0.6"/>
  </g>
  <path d="M1083.5 12.3 L1096 19.4 L1096 32 L1086.6 36.8 L1073.7 31.6 L1073.7 19.4 Z" fill="#7a7a7a"/>
  <path d="M1073.7 19.4 L1086.6 24.5 L1096 19.4 M1086.6 24.5 L1086.6 36.8" stroke="#efeeec" stroke-width="1.1" fill="none"/>
  <defs><pattern id="hatch" width="5" height="5" patternUnits="userSpaceOnUse" patternTransform="rotate(-25)"><rect width="5" height="5" fill="#cfcfcf"/><rect width="2.5" height="5" fill="#6f6f6f"/></pattern></defs>
  <path d="M1122.5 11.5 L1135 18.6 L1135 31.2 L1125.6 36 L1112.7 30.8 L1112.7 18.6 Z" fill="url(#hatch)" stroke="#777" stroke-width="0.8"/>
  <path d="M1112.7 18.6 L1125.6 23.7 L1135 18.6 M1125.6 23.7 L1125.6 36" stroke="#efeeec" stroke-width="1.1" fill="none"/>
 </svg>
 <div class="tb" style="left:688px">Undo</div>
 <div class="tb" style="left:746px">Redo</div>
 <div class="tb" style="left:830px">Adjust</div>
 <div class="tb" style="left:914px">Group</div>
 <div class="tb" style="left:972px">Ungroup</div>
</div>


<div class="abs" style="left:19px;top:77px;font-size:21px;color:#3eadd0">Ball in a Box Puzzle</div>
<svg class="abs" style="left:0;top:110px" width="110" height="175" viewBox="0 110 110 175">
 <circle cx="86.8" cy="126.8" r="8.6" fill="#fbfbfb" stroke="#dadada" stroke-width="1"/>
 <text x="86.8" y="131.3" font-size="12" fill="#8a8a8a" text-anchor="middle" font-family="Liberation Sans">?</text>
 <circle cx="44.1" cy="153.8" r="31" fill="#66686b" stroke="#58595c" stroke-width="1.2"/>
 <g fill="#d5d5d5">
  <path d="M44.4 131.5 L48.6 139.1 L40.3 139.1 Z"/>
  <path d="M44.4 179.2 L48.6 171.5 L40.3 171.5 Z"/>
  <path d="M19.7 154.7 L28.6 150.3 L28.6 159.2 Z"/>
  <path d="M68.6 154.7 L59.8 150.3 L59.8 159.2 Z"/>
  <path d="M35.9 154.5 L44 146.6 L52.1 154.5 L49.4 154.5 L49.4 160.9 L45.8 160.9 L45.8 156.6 L42.2 156.6 L42.2 160.9 L38.6 160.9 L38.6 154.5 Z"/>
 </g>
 <rect x="31.2" y="190.9" width="25.5" height="25.6" rx="4" fill="#646669" stroke="#505255" stroke-width="1"/>
 <path d="M43.8 197 L50.8 200.3 L50.8 208.3 L43.8 211.6 L36.8 208.3 L36.8 200.3 Z" fill="#c8c8c8"/>
 <path d="M36.8 200.3 L43.8 203.6 L50.8 200.3 L43.8 197 Z" fill="#e0e0e0"/>
 <path d="M43.8 203.6 L50.8 200.3 L50.8 208.3 L43.8 211.6 Z" fill="#b4b4b4"/>
 <rect x="33.3" y="223.1" width="21.4" height="51.5" rx="10.7" fill="#646669" stroke="#505255" stroke-width="1"/>
 <path d="M33.3 249.4 H54.7" stroke="#4a4b4e" stroke-width="1"/>
 <path d="M39.8 238.2 H48.2 M44 234 V242.4" stroke="#d8d8d8" stroke-width="1.3"/>
 <path d="M41.5 262.2 H46.5" stroke="#d8d8d8" stroke-width="1.6"/>
</svg>
<div class="abs" style="left:930px;top:654px;width:66px;height:19px;border:1px solid #a3a3a3;border-radius:4px;background:linear-gradient(#fdfdfd,#e4e4e4);font-size:12px;color:#111;text-align:center;line-height:20px">Edit grid</div>


<div id="insp" class="abs">
 <div class="abs" style="left:0;width:269px;top:10px;text-align:center;font-size:14px;font-weight:bold;color:#5e5a56;padding-left:1px">Inspector</div>
 <div class="abs" style="left:54px;top:45px;width:67px;height:47px;border-radius:4px;background:#fff;box-shadow:0 0 2px rgba(0,0,0,.25)"></div>
 <div class="abs" style="left:57px;top:48px;width:61px;height:41px;background:#e81b2d"></div>
 <div class="abs" style="left:57px;top:72px;width:61px;text-align:center;font-size:11px;font-weight:bold;color:#fff;text-shadow:0 1px 1px rgba(0,0,0,.5)">Color</div>
 <div class="abs" style="left:135px;top:45px;width:67px;height:47px;border-radius:4px;background:#fff;box-shadow:0 0 2px rgba(0,0,0,.25)"></div>
 <div class="abs" style="left:138px;top:48px;width:61px;height:41px;background:repeating-linear-gradient(45deg,#cfd3dd 0,#cfd3dd 4.5px,#b8bcc6 4.5px,#b8bcc6 9px)"></div>
 <div class="abs" style="left:138px;top:72px;width:61px;text-align:center;font-size:11px;font-weight:bold;color:#fff;text-shadow:0 1px 1px rgba(0,0,0,.5)">Hole</div>
 <div class="abs" style="left:244px;top:49px;font-size:12px;font-weight:bold;color:#1b9ac9">?</div>
 <svg class="abs" style="left:54px;top:107px" width="16" height="19" viewBox="0 0 16 19">
  <path d="M3.5 7.5 V5 C3.5 1.5 10.5 1.5 10.5 5 V6" stroke="#666" stroke-width="2.2" fill="none"/>
  <rect x="0.5" y="8" width="14" height="10.5" rx="2" fill="#666"/>
 </svg>
 <div class="abs" style="left:80px;top:112px;font-size:13px;color:#55514d">Lock transformation</div>
 <div class="abs" style="left:10px;top:137px;width:250px;height:1px;background:#cfcfcf"></div>
 <div class="abs" style="left:10px;top:146px;font-size:12.5px;color:#55514d">Select one shape to edit its parameters.</div>
</div>


<div id="shadow" class="abs"></div>
<div id="side" class="abs">
 <div class="srow" style="top:0"></div>
 <div class="tri" style="top:13px"></div><div class="stxt" style="top:10px">Favorites</div>
 <div class="srow" style="top:35px"></div>
 <div class="tri" style="top:47px"></div><div class="stxt" style="top:44px">Import</div>
 <div class="srow" style="top:69px"></div>
 <div class="tri" style="top:82px"></div><div class="stxt" style="top:79px;white-space:nowrap">Shape Generators</div>
 <div class="srow" style="top:104px"></div>
 <div class="tri" style="top:117px"></div><div class="stxt" style="top:114px">Helpers</div>
 <div class="srow" style="top:138px"></div>
 <div class="abs" style="left:15px;top:152px;width:0;height:0;border-left:5px solid transparent;border-right:5px solid transparent;border-top:9px solid #bdb9b5"></div>
 <div class="stxt" style="top:148px">Geometric</div>
 <svg class="abs" style="left:0;top:0" width="130" height="626" viewBox="1021 53 130 626">
  <defs>
   <radialGradient id="glow"><stop offset="0" stop-color="#000" stop-opacity="0.13"/><stop offset="1" stop-color="#000" stop-opacity="0"/></radialGradient>
  </defs>
  <circle cx="1081" cy="392" r="45" fill="url(#glow)"/>
  <circle cx="1083" cy="515" r="45" fill="url(#glow)"/>
  <circle cx="1083" cy="640" r="45" fill="url(#glow)"/>
  <g stroke="#7a0e17" stroke-width="1.2" stroke-linejoin="round">
   <path d="M1064.2 237 L1116 244.8 L1101.3 271.3 L1042.3 262.1 Z" fill="#c81a2b"/>
   <path d="M1042.3 262.1 L1101.3 271.3 L1100.1 320.4 L1045.8 309.4 Z" fill="#a8131f"/>
   <path d="M1101.3 271.3 L1116 244.8 L1113 290.4 L1100.1 320.4 Z" fill="#b8172a"/>
  </g>
  <g stroke="#8a7200" stroke-width="1.3" stroke-linejoin="round">
   <path d="M1081.2 371.5 L1046.6 427.1 L1098.8 439 Z" fill="#dcb81a"/>
   <path d="M1081.2 371.5 L1098.8 439 L1112.4 407.7 Z" fill="#f2cf22"/>
  </g>
  <g stroke="#2f7681" stroke-width="1.2" stroke-linejoin="round">
   <path d="M1045.6 537.7 C1048 529 1062 501 1072 494 C1080 489 1096 489.5 1105 499 C1112 506 1115 515 1112 523 L1099.8 548.3 Z" fill="#67c3cf"/>
   <path d="M1045.6 537.7 C1049 529 1060 508 1066 500 C1069 497 1073 493 1078 491.5 C1070 500 1058 518 1054 522 Z" fill="#4e9faa" stroke="none"/>
   <path d="M1045.6 537.7 C1050 523 1062 517 1072 518.5 C1088 520.5 1099 535 1099.8 548.3 Z" fill="#4fa3ae"/>
  </g>
  <g stroke="#1d2c66" stroke-width="1.2" stroke-linejoin="round">
   <path d="M1042.4 618.6 L1101 628.3 L1099.7 682 L1046 666.7 Z" fill="#2b3d7f"/>
   <path d="M1101 628.3 L1112.6 647 L1099.7 682 Z" fill="#314c97"/>
  </g>
 </svg>
 <div class="lbl" style="top:270px">Box</div>
 <div class="lbl" style="top:390px">Pyramid</div>
 <div class="lbl" style="top:509px">Round Roof</div>
</div>
<div class="abs" style="left:1005px;top:338px;width:16px;height:47px;background:#efeeec;border:1px solid #c9c7c4;border-right:none"></div>
<svg class="abs" style="left:1005px;top:338px" width="16" height="47"><path d="M6.2 12.9 L12.7 23.9 L6.2 34.8" stroke="#555" stroke-width="1.6" fill="none"/></svg>

</body></html>
